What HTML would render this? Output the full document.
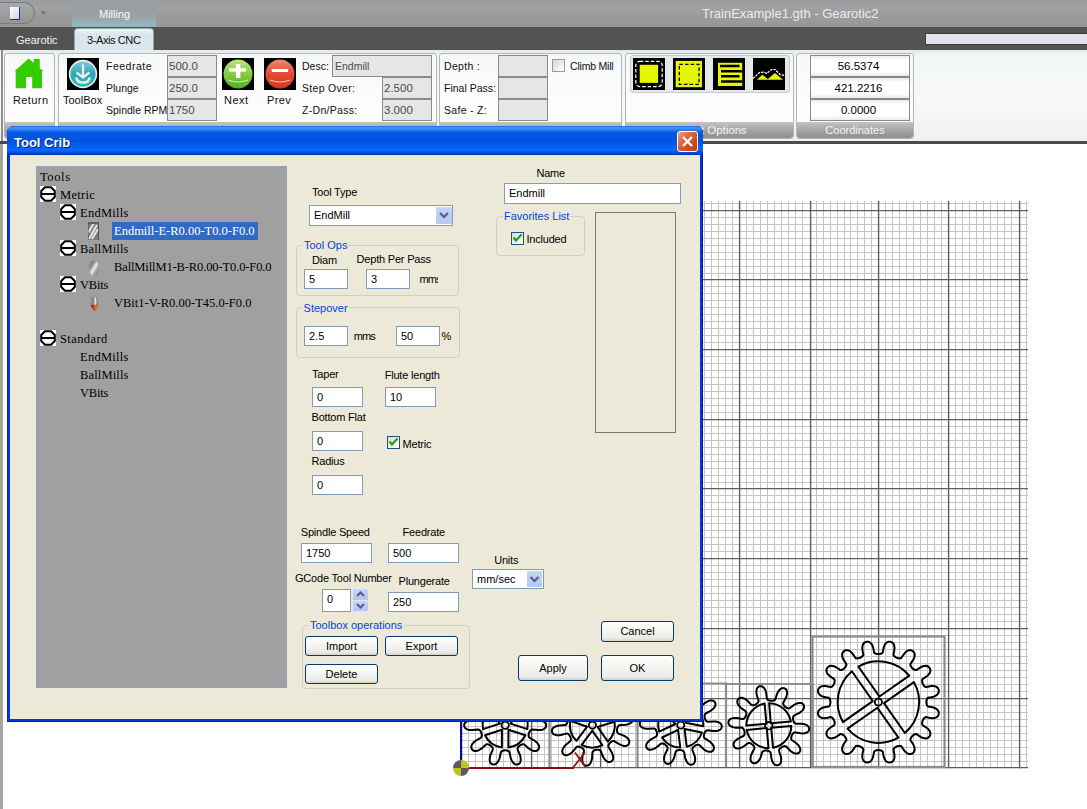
<!DOCTYPE html>
<html><head><meta charset="utf-8">
<style>
*{box-sizing:border-box;margin:0;padding:0}
html,body{width:1087px;height:809px;overflow:hidden;background:#fff;font-family:"Liberation Sans",sans-serif;position:relative}
.a{position:absolute}
svg{display:block}
.t{position:absolute;white-space:nowrap;line-height:1}
/* app chrome */
#titlebar{left:0;top:0;width:1087px;height:27px;background:linear-gradient(#9b9da1 0,#9c9ea1 6px,#a2a2a2 7px,#9b9b9b 16px,#979797 27px)}
#tabstrip{left:0;top:27px;width:1087px;height:23px;background:#535353}
#ribbon{left:0;top:50px;width:1087px;height:91px;background:linear-gradient(#dde9ee,#f3f6f7 6px,#f7f8f8 60%,#eef0f1)}
#ribline{left:0;top:141px;width:1087px;height:3px;background:#4a4a4a}
.grp{position:absolute;border:1px solid #b4b4b4;border-radius:3px;background:linear-gradient(#f6f8f8,#fbfbfb 40%,#fdfdfd)}
.glab{position:absolute;left:0;right:0;bottom:0;height:16px;background:linear-gradient(#c4c4c4,#a0a0a0 60%,#8e8e8e);color:#f4f4f4;font-size:11px;text-align:center;line-height:16px;border-radius:0 0 3px 3px}
.rl{font-size:10.5px;color:#111}
.rin{position:absolute;background:#e6e6e6;border:1px solid #8a8a8a;font-size:11.5px;color:#4a4a4a;line-height:20px;padding-left:1px}
.ico{position:absolute;width:32px;height:32px;background:#000}
/* dialog */
#dlg{left:7px;top:126px;width:696px;height:596px;background:#0535de;border-radius:7px 7px 0 0;box-shadow:inset 1px 0 #0028b8,inset -1px 0 #001ea8,inset 0 -1px #001ea8}
#dtitle{left:0;top:0;width:696px;height:29px;border-radius:7px 7px 0 0;background:linear-gradient(#0a50dc 0px,#3d93fb 1px,#3a8cf8 3px,#0a5ce8 6px,#0355e2 9px,#0052e0 15px,#0560f2 20px,#0a68fc 24px,#0555e8 26px,#0036c4 28px)}
#client{left:3px;top:29px;width:690px;height:564px;background:#ece9d8}
.dl{font-size:11px;color:#000;letter-spacing:-0.2px}
.din{position:absolute;background:#fff;border:1px solid #7f9db9;font-size:11px;line-height:18px;padding-left:9px;color:#000}
.gb{position:absolute;border:1px solid #d0d0bf;border-radius:4px}
.gbt{position:absolute;background:#ece9d8;color:#0046d5;font-size:11px;padding:0 1px;line-height:12px}
.btn{position:absolute;border:1px solid #003c74;border-radius:3px;background:linear-gradient(#fff,#f4f4f0 50%,#ecebe6 85%,#d6d0c5);font-size:11px;text-align:center;color:#000}
.cb{position:absolute;width:13px;height:13px;border:1px solid #1c5180;background:linear-gradient(135deg,#dcdcd7,#fff)}
.tree{font-family:"Liberation Serif",serif;font-size:12.5px;color:#000}
.node{position:absolute;width:16px;height:16px;background:#fff}
</style></head><body>

<!-- ============ APP CHROME ============ -->
<div id="titlebar" class="a">
  <div class="a" style="left:0;top:2px;width:35px;height:22px;border:1px solid #7c7c7c;border-left:none;border-radius:0 11px 11px 0;background:linear-gradient(#a8a8a8,#959595)"></div>
  <div class="a" style="left:10px;top:7px;width:10px;height:13px;background:linear-gradient(135deg,#fff,#c8d4ec);border-right:1px solid #2a3a55;border-bottom:1px solid #2a3a55"></div>
  <div class="t" style="left:41px;top:9px;font-size:8px;color:#444">&#187;</div>
  <div class="a" style="left:72px;top:6px;width:84px;height:21px;background:linear-gradient(#999c9e,#9aa2a6 50%,#98b6c2 92%,#7fb4c8)"></div>
  <div class="t" style="left:99px;top:9px;font-size:11px;color:#fafafa">Milling</div>
  <div class="t" style="left:702px;top:7px;font-size:13px;color:#ececec">TrainExample1.gth - Gearotic2</div>
</div>
<div id="tabstrip" class="a">
  <div class="t" style="left:16px;top:8px;font-size:11px;color:#f4f4f4;letter-spacing:0px">Gearotic</div>
  <div class="a" style="left:74px;top:1px;width:80px;height:22px;border-radius:4px 4px 0 0;border:1px solid #9aa4a8;border-bottom:none;background:linear-gradient(#eef4f6,#d8e5ea 30%,#dbe8ec)"></div>
  <div class="t" style="left:87px;top:8px;font-size:11px;color:#111;letter-spacing:-0.4px">3-Axis CNC</div>
  <div class="a" style="left:925px;top:6px;width:170px;height:12px;background:#e2e3ec;border:1px solid #3a3a3a"></div>
</div>
<div id="ribbon" class="a">
  <div class="a" style="left:1px;top:0;width:2px;height:91px;background:#8e8e8e"></div>
  <!-- group 1 Return -->
  <div class="grp" style="left:4px;top:3px;width:51px;height:86px"><div class="glab"></div></div>
  <!-- group 2 -->
  <div class="grp" style="left:58px;top:3px;width:379px;height:86px"><div class="glab"></div></div>
  <!-- group 3 -->
  <div class="grp" style="left:439px;top:3px;width:183px;height:86px"><div class="glab"></div></div>
  <!-- group 4 -->
  <div class="grp" style="left:625px;top:3px;width:169px;height:86px"><div class="glab" style="padding-left:14px;font-size:11.5px">Cut Options</div></div>
  <!-- group 5 -->
  <div class="grp" style="left:796px;top:3px;width:118px;height:86px"><div class="glab">Coordinates</div></div>
</div>
<div id="ribline" class="a"></div>
<div class="a" style="left:0;top:144px;width:3px;height:665px;background:#a8a49c"></div>

<!-- ribbon contents (absolute page coords) -->
<svg class="a" style="left:0;top:48px" width="60" height="45">
  <path d="M14.6 23 L28.7 10.5 L33.7 15 L33.7 11 L39.8 11 L39.8 20.5 L43.7 23 L42.1 23 L42.1 40.2 L32.2 40.2 L32.2 29.1 L26 29.1 L26 40.2 L15.7 40.2 L15.7 23 Z" fill="#33cc00"/>
</svg>
<div class="t rl" style="left:13px;top:95px;font-size:11px;letter-spacing:0.4px">Return</div>
<svg class="ico" style="left:67px;top:58px" width="32" height="32"><defs><linearGradient id="tg" x1="0" y1="0" x2="0" y2="1"><stop offset="0" stop-color="#7ad0de"/><stop offset="0.5" stop-color="#2aa6b8"/><stop offset="1" stop-color="#18c8b0"/></linearGradient></defs>
<rect width="32" height="32" fill="#000"/><circle cx="16" cy="16" r="14.2" fill="#f4ecec"/><circle cx="16" cy="16" r="12.6" fill="url(#tg)"/>
<path d="M16 6.5 V19" stroke="#f6e8ec" stroke-width="2.4"/><path d="M9.5 14.5 L16 19.5 L22.5 14.5" fill="none" stroke="#f6e8ec" stroke-width="2.4"/>
<path d="M9.5 19.5 Q9.5 24.5 16 24.5 Q22.5 24.5 22.5 19.5" fill="none" stroke="#f6e8ec" stroke-width="2.6"/></svg>
<div class="t rl" style="left:63px;top:95px;font-size:11px">ToolBox</div>
<div class="t rl" style="left:106px;top:61px;letter-spacing:0.5px">Feedrate</div>
<div class="t rl" style="left:106px;top:83px">Plunge</div>
<div class="t rl" style="left:106px;top:105px">Spindle RPM</div>
<div class="rin" style="left:167px;top:55px;width:50px;height:22px">500.0</div>
<div class="rin" style="left:167px;top:77px;width:50px;height:22px">250.0</div>
<div class="rin" style="left:167px;top:99px;width:50px;height:22px">1750</div>
<svg class="ico" style="left:222px;top:58px" width="32" height="32"><defs><linearGradient id="gg" x1="0" y1="0" x2="0" y2="1"><stop offset="0" stop-color="#b8e67a"/><stop offset="0.6" stop-color="#7cc63a"/><stop offset="1" stop-color="#4cb020"/></linearGradient></defs>
<rect width="32" height="32" fill="#000"/><circle cx="16" cy="16" r="14.5" fill="url(#gg)"/>
<rect x="7" y="10.2" width="17" height="3.4" fill="#fff"/><rect x="13.9" y="6" width="4.5" height="14" fill="#fff"/>
<path d="M6 22 Q16 26 26 22" fill="none" stroke="#c8f0a0" stroke-width="1.2"/></svg>
<div class="t rl" style="left:224px;top:95px;font-size:11px;letter-spacing:0.5px">Next</div>
<svg class="ico" style="left:264px;top:58px" width="32" height="32"><defs><linearGradient id="rg" x1="0" y1="0" x2="0" y2="1"><stop offset="0" stop-color="#f08878"/><stop offset="0.5" stop-color="#e04a34"/><stop offset="1" stop-color="#d83820"/></linearGradient></defs>
<rect width="32" height="32" fill="#000"/><circle cx="16" cy="16" r="14.5" fill="url(#rg)"/>
<rect x="7.7" y="11" width="16.3" height="3" fill="#fff"/>
<path d="M6 22 Q16 26 26 22" fill="none" stroke="#f8c0b0" stroke-width="1.2"/></svg>
<div class="t rl" style="left:267px;top:95px;font-size:11px;letter-spacing:0.4px">Prev</div>
<div class="t rl" style="left:302px;top:61px">Desc:</div>
<div class="t rl" style="left:302px;top:83px;letter-spacing:0.3px">Step Over:</div>
<div class="t rl" style="left:302px;top:105px;letter-spacing:0.3px">Z-Dn/Pass:</div>
<div class="rin" style="left:332px;top:55px;width:100px;height:22px;font-size:10.5px;line-height:21px;padding-left:2px">Endmill</div>
<div class="rin" style="left:382px;top:77px;width:50px;height:22px">2.500</div>
<div class="rin" style="left:382px;top:99px;width:50px;height:22px">3.000</div>
<div class="t rl" style="left:444px;top:61px;letter-spacing:0.3px">Depth :</div>
<div class="t rl" style="left:444px;top:83px">Final Pass:</div>
<div class="t rl" style="left:444px;top:105px;letter-spacing:0.3px">Safe - Z:</div>
<div class="rin" style="left:498px;top:55px;width:50px;height:22px"></div>
<div class="rin" style="left:498px;top:77px;width:50px;height:22px"></div>
<div class="rin" style="left:498px;top:99px;width:50px;height:22px"></div>
<div class="a" style="left:552px;top:59px;width:13px;height:13px;border:1px solid #9a9a9a;background:linear-gradient(135deg,#d8d8d8,#fff)"></div>
<div class="t rl" style="left:570px;top:61px;letter-spacing:-0.2px">Climb Mill</div>
<div class="a" style="left:630px;top:55px;width:160px;height:38px;border:1px solid #c4c8cc;border-radius:3px;background:#e4e8ea"></div>
<svg class="ico" style="left:633px;top:58px" width="32" height="32"><rect width="32" height="32" fill="#000"/><rect x="6.7" y="6.8" width="18.4" height="18.1" fill="#e6f500"/><rect x="2.8" y="3.3" width="26.4" height="25.3" rx="4" fill="none" stroke="#fff" stroke-width="1.2" stroke-dasharray="3.5 2"/></svg>
<svg class="ico" style="left:673px;top:58px" width="32" height="32"><rect width="32" height="32" fill="#000"/><rect x="2.7" y="2.9" width="26.3" height="26.3" fill="#e6f500"/><rect x="6.3" y="6.3" width="19.7" height="20" fill="none" stroke="#000" stroke-width="1.3" stroke-dasharray="3.5 2.2"/></svg>
<svg class="ico" style="left:713px;top:58px" width="32" height="32"><rect width="32" height="32" fill="#000"/><rect x="5" y="4.8" width="24.2" height="23.2" fill="#e6f500"/>
<path d="M7 8 H26.5 M8 13.3 H29.2 M8 18.3 H26.5 M8 23.5 H29.2" stroke="#000" stroke-width="2.4"/><path d="M7 8 V23.5" stroke="#000" stroke-width="0"/></svg>
<svg class="ico" style="left:753px;top:58px" width="32" height="32"><rect width="32" height="32" fill="#000"/><path d="M4 21.8 L9.3 16.8 L14.7 21 L22 14.9 L30 21.8 Z" fill="#e6f500"/>
<path d="M0 20.5 L6.5 14.5 L11 14 L13.5 15.5 L18.5 11.5 L22 11.5 L27 16.5 L32 17.5" fill="none" stroke="#fff" stroke-width="1.2" stroke-dasharray="2.5 1"/></svg>
<div class="rin" style="left:810px;top:55px;width:100px;height:22px;background:linear-gradient(#e8e8e8,#fff 20%,#fff 80%,#e8e8e8);color:#000;text-align:center;padding:0 3px 0 0;font-size:11.5px">56.5374</div>
<div class="rin" style="left:810px;top:77px;width:100px;height:22px;background:linear-gradient(#e8e8e8,#fff 20%,#fff 80%,#e8e8e8);color:#000;text-align:center;padding:0 3px 0 0;font-size:11.5px">421.2216</div>
<div class="rin" style="left:810px;top:99px;width:100px;height:22px;background:linear-gradient(#e8e8e8,#fff 20%,#fff 80%,#e8e8e8);color:#000;text-align:center;padding:0 3px 0 0;font-size:11.5px">0.0000</div>

<!-- ============ CANVAS ============ -->
<svg class="a" style="left:0;top:0" width="1087" height="809">
<path d="M468.5,201.0V768.0M475.5,201.0V768.0M482.5,201.0V768.0M489.5,201.0V768.0M496.5,201.0V768.0M503.5,201.0V768.0M510.5,201.0V768.0M517.5,201.0V768.0M524.5,201.0V768.0M537.5,201.0V768.0M544.5,201.0V768.0M551.5,201.0V768.0M558.5,201.0V768.0M565.5,201.0V768.0M572.5,201.0V768.0M579.5,201.0V768.0M586.5,201.0V768.0M593.5,201.0V768.0M607.5,201.0V768.0M614.5,201.0V768.0M621.5,201.0V768.0M628.5,201.0V768.0M635.5,201.0V768.0M642.5,201.0V768.0M649.5,201.0V768.0M656.5,201.0V768.0M663.5,201.0V768.0M676.5,201.0V768.0M683.5,201.0V768.0M690.5,201.0V768.0M697.5,201.0V768.0M704.5,201.0V768.0M711.5,201.0V768.0M718.5,201.0V768.0M725.5,201.0V768.0M732.5,201.0V768.0M746.5,201.0V768.0M753.5,201.0V768.0M760.5,201.0V768.0M767.5,201.0V768.0M774.5,201.0V768.0M781.5,201.0V768.0M788.5,201.0V768.0M795.5,201.0V768.0M802.5,201.0V768.0M816.5,201.0V768.0M823.5,201.0V768.0M830.5,201.0V768.0M837.5,201.0V768.0M844.5,201.0V768.0M850.5,201.0V768.0M857.5,201.0V768.0M864.5,201.0V768.0M871.5,201.0V768.0M885.5,201.0V768.0M892.5,201.0V768.0M899.5,201.0V768.0M906.5,201.0V768.0M913.5,201.0V768.0M920.5,201.0V768.0M927.5,201.0V768.0M934.5,201.0V768.0M941.5,201.0V768.0M955.5,201.0V768.0M962.5,201.0V768.0M969.5,201.0V768.0M976.5,201.0V768.0M983.5,201.0V768.0M990.5,201.0V768.0M997.5,201.0V768.0M1004.5,201.0V768.0M1011.5,201.0V768.0M1026.5,201.0V768.0M461.0,761.5H1028.0M461.0,754.5H1028.0M461.0,747.5H1028.0M461.0,740.5H1028.0M461.0,733.5H1028.0M461.0,726.5H1028.0M461.0,719.5H1028.0M461.0,712.5H1028.0M461.0,705.5H1028.0M461.0,691.5H1028.0M461.0,684.5H1028.0M461.0,677.5H1028.0M461.0,670.5H1028.0M461.0,663.5H1028.0M461.0,656.5H1028.0M461.0,649.5H1028.0M461.0,642.5H1028.0M461.0,635.5H1028.0M461.0,621.5H1028.0M461.0,614.5H1028.0M461.0,607.5H1028.0M461.0,600.5H1028.0M461.0,593.5H1028.0M461.0,586.5H1028.0M461.0,579.5H1028.0M461.0,572.5H1028.0M461.0,565.5H1028.0M461.0,551.5H1028.0M461.0,544.5H1028.0M461.0,537.5H1028.0M461.0,530.5H1028.0M461.0,523.5H1028.0M461.0,516.5H1028.0M461.0,509.5H1028.0M461.0,502.5H1028.0M461.0,495.5H1028.0M461.0,482.5H1028.0M461.0,475.5H1028.0M461.0,468.5H1028.0M461.0,461.5H1028.0M461.0,454.5H1028.0M461.0,447.5H1028.0M461.0,440.5H1028.0M461.0,433.5H1028.0M461.0,426.5H1028.0M461.0,412.5H1028.0M461.0,405.5H1028.0M461.0,398.5H1028.0M461.0,391.5H1028.0M461.0,384.5H1028.0M461.0,377.5H1028.0M461.0,370.5H1028.0M461.0,363.5H1028.0M461.0,356.5H1028.0M461.0,342.5H1028.0M461.0,335.5H1028.0M461.0,328.5H1028.0M461.0,321.5H1028.0M461.0,314.5H1028.0M461.0,307.5H1028.0M461.0,300.5H1028.0M461.0,293.5H1028.0M461.0,286.5H1028.0M461.0,273.5H1028.0M461.0,266.5H1028.0M461.0,259.5H1028.0M461.0,252.5H1028.0M461.0,245.5H1028.0M461.0,238.5H1028.0M461.0,231.5H1028.0M461.0,224.5H1028.0M461.0,217.5H1028.0M461.0,203.5H1028.0" stroke="#c4c4c4" stroke-width="1" fill="none"/>
<path d="M461.6,201.0V768.5M531.6,201.0V768.5M600.6,201.0V768.5M670.6,201.0V768.5M739.6,201.0V768.5M810.6,201.0V768.5M878.6,201.0V768.5M948.6,201.0V768.5M1019.6,201.0V768.5M461.0,767.6H1028.0M461.0,698.6H1028.0M461.0,628.6H1028.0M461.0,558.6H1028.0M461.0,488.6H1028.0M461.0,419.6H1028.0M461.0,349.6H1028.0M461.0,279.6H1028.0M461.0,210.6H1028.0" stroke="#5e5e5e" stroke-width="1.4" fill="none"/>
<path d="M549.5,767 V683.5 H637.5 V767 M637.5,683.5 H726 V767 M726,684 H812.5 V767" fill="none" stroke="#8c8c8c" stroke-width="2.2"/>
<rect x="812.5" y="636.5" width="132" height="130.5" fill="none" stroke="#8c8c8c" stroke-width="2.2"/>
<path d="M546.2,725.3 L546.2,725.7 L546.1,726.1 L546.0,726.5 L545.9,726.9 L545.7,727.3 L545.4,727.7 L545.1,728.0 L544.7,728.4 L544.2,728.8 L543.6,729.1 L542.9,729.4 L542.0,729.7 L541.0,729.9 L539.7,730.1 L537.8,730.1 L532.4,729.6 L531.5,729.7 L531.1,729.9 L530.8,730.1 L530.5,730.3 L530.3,730.6 L530.2,730.8 L530.0,731.0 L529.8,731.2 L529.7,731.4 L529.6,731.7 L529.4,731.9 L529.3,732.1 L529.2,732.3 L529.1,732.6 L529.1,732.8 L529.0,733.0 L528.9,733.3 L528.8,733.5 L528.8,733.7 L528.7,734.0 L528.7,734.2 L528.7,734.5 L528.6,734.7 L528.6,735.0 L528.6,735.3 L528.6,735.5 L528.6,735.8 L528.7,736.1 L528.7,736.4 L528.9,736.8 L529.0,737.2 L529.7,737.8 L534.4,740.5 L535.9,741.7 L536.9,742.6 L537.6,743.4 L538.1,744.1 L538.5,744.8 L538.8,745.4 L539.0,746.0 L539.1,746.5 L539.1,747.0 L539.1,747.5 L539.0,747.9 L538.9,748.3 L538.8,748.7 L538.6,749.1 L538.4,749.4 L538.1,749.7 L537.8,750.0 L537.5,750.3 L537.2,750.5 L536.8,750.7 L536.3,750.8 L535.8,751.0 L535.3,751.0 L534.7,751.0 L534.0,750.9 L533.3,750.8 L532.4,750.5 L531.5,750.1 L530.3,749.4 L528.7,748.4 L524.6,744.7 L523.8,744.3 L523.4,744.3 L523.1,744.2 L522.7,744.3 L522.4,744.3 L522.2,744.4 L521.9,744.5 L521.7,744.6 L521.4,744.7 L521.2,744.8 L520.9,744.9 L520.7,745.0 L520.5,745.1 L520.3,745.2 L520.1,745.4 L519.9,745.5 L519.7,745.7 L519.5,745.8 L519.3,746.0 L519.1,746.2 L519.0,746.3 L518.8,746.5 L518.6,746.7 L518.4,746.9 L518.3,747.1 L518.1,747.3 L518.0,747.6 L517.8,747.9 L517.7,748.1 L517.6,748.5 L517.5,748.9 L517.7,749.8 L519.9,754.8 L520.4,756.6 L520.6,757.9 L520.7,759.0 L520.7,759.9 L520.7,760.6 L520.5,761.3 L520.3,761.9 L520.1,762.4 L519.9,762.8 L519.6,763.2 L519.3,763.5 L519.0,763.8 L518.6,764.0 L518.2,764.2 L517.9,764.3 L517.5,764.4 L517.1,764.5 L516.7,764.5 L516.2,764.5 L515.8,764.4 L515.4,764.3 L514.9,764.1 L514.4,763.8 L514.0,763.4 L513.5,763.0 L513.0,762.4 L512.4,761.7 L511.9,760.8 L511.3,759.6 L510.7,757.8 L509.5,752.5 L509.1,751.6 L508.8,751.3 L508.5,751.1 L508.2,751.0 L508.0,750.8 L507.7,750.7 L507.4,750.6 L507.2,750.6 L506.9,750.5 L506.7,750.4 L506.4,750.4 L506.2,750.4 L505.9,750.3 L505.7,750.3 L505.4,750.3 L505.2,750.3 L505.0,750.3 L504.7,750.3 L504.5,750.3 L504.2,750.4 L504.0,750.4 L503.7,750.4 L503.5,750.5 L503.2,750.6 L503.0,750.6 L502.7,750.7 L502.4,750.8 L502.2,751.0 L501.9,751.1 L501.6,751.3 L501.3,751.6 L500.9,752.5 L499.7,757.8 L499.1,759.6 L498.5,760.8 L498.0,761.7 L497.4,762.4 L496.9,763.0 L496.4,763.4 L496.0,763.8 L495.5,764.1 L495.0,764.3 L494.6,764.4 L494.2,764.5 L493.7,764.5 L493.3,764.5 L492.9,764.4 L492.5,764.3 L492.2,764.2 L491.8,764.0 L491.4,763.8 L491.1,763.5 L490.8,763.2 L490.5,762.8 L490.3,762.4 L490.1,761.9 L489.9,761.3 L489.7,760.6 L489.7,759.9 L489.7,759.0 L489.8,757.9 L490.0,756.6 L490.5,754.8 L492.7,749.8 L492.9,748.9 L492.8,748.5 L492.7,748.1 L492.6,747.9 L492.4,747.6 L492.3,747.3 L492.1,747.1 L492.0,746.9 L491.8,746.7 L491.6,746.5 L491.4,746.3 L491.3,746.2 L491.1,746.0 L490.9,745.8 L490.7,745.7 L490.5,745.5 L490.3,745.4 L490.1,745.2 L489.9,745.1 L489.7,745.0 L489.5,744.9 L489.2,744.8 L489.0,744.7 L488.7,744.6 L488.5,744.5 L488.2,744.4 L488.0,744.3 L487.7,744.3 L487.3,744.2 L487.0,744.3 L486.6,744.3 L485.8,744.7 L481.7,748.4 L480.1,749.4 L478.9,750.1 L478.0,750.5 L477.1,750.8 L476.4,750.9 L475.7,751.0 L475.1,751.0 L474.6,751.0 L474.1,750.8 L473.6,750.7 L473.2,750.5 L472.9,750.3 L472.6,750.0 L472.3,749.7 L472.0,749.4 L471.8,749.1 L471.6,748.7 L471.5,748.3 L471.4,747.9 L471.3,747.5 L471.3,747.0 L471.3,746.5 L471.4,746.0 L471.6,745.4 L471.9,744.8 L472.3,744.1 L472.8,743.4 L473.5,742.6 L474.5,741.7 L476.0,740.5 L480.7,737.8 L481.4,737.2 L481.5,736.8 L481.7,736.4 L481.7,736.1 L481.8,735.8 L481.8,735.5 L481.8,735.3 L481.8,735.0 L481.8,734.7 L481.7,734.5 L481.7,734.2 L481.7,734.0 L481.6,733.7 L481.6,733.5 L481.5,733.3 L481.4,733.0 L481.3,732.8 L481.3,732.6 L481.2,732.3 L481.1,732.1 L481.0,731.9 L480.8,731.7 L480.7,731.4 L480.6,731.2 L480.4,731.0 L480.2,730.8 L480.1,730.6 L479.9,730.3 L479.6,730.1 L479.3,729.9 L478.9,729.7 L478.0,729.6 L472.6,730.1 L470.7,730.1 L469.4,729.9 L468.4,729.7 L467.5,729.4 L466.8,729.1 L466.2,728.8 L465.7,728.4 L465.3,728.0 L465.0,727.7 L464.7,727.3 L464.5,726.9 L464.4,726.5 L464.3,726.1 L464.2,725.7 L464.2,725.3 L464.2,724.9 L464.3,724.5 L464.4,724.1 L464.5,723.7 L464.7,723.3 L465.0,722.9 L465.3,722.6 L465.7,722.2 L466.2,721.8 L466.8,721.5 L467.5,721.2 L468.4,720.9 L469.4,720.7 L470.7,720.5 L472.6,720.5 L478.0,721.0 L478.9,720.9 L479.3,720.7 L479.6,720.5 L479.9,720.3 L480.1,720.0 L480.2,719.8 L480.4,719.6 L480.6,719.4 L480.7,719.2 L480.8,718.9 L481.0,718.7 L481.1,718.5 L481.2,718.3 L481.3,718.0 L481.3,717.8 L481.4,717.6 L481.5,717.3 L481.6,717.1 L481.6,716.9 L481.7,716.6 L481.7,716.4 L481.7,716.1 L481.8,715.9 L481.8,715.6 L481.8,715.3 L481.8,715.1 L481.8,714.8 L481.7,714.5 L481.7,714.2 L481.5,713.8 L481.4,713.4 L480.7,712.8 L476.0,710.1 L474.5,708.9 L473.5,708.0 L472.8,707.2 L472.3,706.5 L471.9,705.8 L471.6,705.2 L471.4,704.6 L471.3,704.1 L471.3,703.6 L471.3,703.1 L471.4,702.7 L471.5,702.3 L471.6,701.9 L471.8,701.5 L472.0,701.2 L472.3,700.9 L472.6,700.6 L472.9,700.3 L473.2,700.1 L473.6,699.9 L474.1,699.8 L474.6,699.6 L475.1,699.6 L475.7,699.6 L476.4,699.7 L477.1,699.8 L478.0,700.1 L478.9,700.5 L480.1,701.2 L481.7,702.2 L485.8,705.9 L486.6,706.3 L487.0,706.3 L487.3,706.4 L487.7,706.3 L488.0,706.3 L488.2,706.2 L488.5,706.1 L488.7,706.0 L489.0,705.9 L489.2,705.8 L489.5,705.7 L489.7,705.6 L489.9,705.5 L490.1,705.4 L490.3,705.2 L490.5,705.1 L490.7,704.9 L490.9,704.8 L491.1,704.6 L491.3,704.4 L491.4,704.3 L491.6,704.1 L491.8,703.9 L492.0,703.7 L492.1,703.5 L492.3,703.3 L492.4,703.0 L492.6,702.7 L492.7,702.5 L492.8,702.1 L492.9,701.7 L492.7,700.8 L490.5,695.8 L490.0,694.0 L489.8,692.7 L489.7,691.6 L489.7,690.7 L489.7,690.0 L489.9,689.3 L490.1,688.7 L490.3,688.2 L490.5,687.8 L490.8,687.4 L491.1,687.1 L491.4,686.8 L491.8,686.6 L492.2,686.4 L492.5,686.3 L492.9,686.2 L493.3,686.1 L493.7,686.1 L494.2,686.1 L494.6,686.2 L495.0,686.3 L495.5,686.5 L496.0,686.8 L496.4,687.2 L496.9,687.6 L497.4,688.2 L498.0,688.9 L498.5,689.8 L499.1,691.0 L499.7,692.8 L500.9,698.1 L501.3,699.0 L501.6,699.3 L501.9,699.5 L502.2,699.6 L502.4,699.8 L502.7,699.9 L503.0,700.0 L503.2,700.0 L503.5,700.1 L503.7,700.2 L504.0,700.2 L504.2,700.2 L504.5,700.3 L504.7,700.3 L505.0,700.3 L505.2,700.3 L505.4,700.3 L505.7,700.3 L505.9,700.3 L506.2,700.2 L506.4,700.2 L506.7,700.2 L506.9,700.1 L507.2,700.0 L507.4,700.0 L507.7,699.9 L508.0,699.8 L508.2,699.6 L508.5,699.5 L508.8,699.3 L509.1,699.0 L509.5,698.1 L510.7,692.8 L511.3,691.0 L511.9,689.8 L512.4,688.9 L513.0,688.2 L513.5,687.6 L514.0,687.2 L514.4,686.8 L514.9,686.5 L515.4,686.3 L515.8,686.2 L516.2,686.1 L516.7,686.1 L517.1,686.1 L517.5,686.2 L517.9,686.3 L518.2,686.4 L518.6,686.6 L519.0,686.8 L519.3,687.1 L519.6,687.4 L519.9,687.8 L520.1,688.2 L520.3,688.7 L520.5,689.3 L520.7,690.0 L520.7,690.7 L520.7,691.6 L520.6,692.7 L520.4,694.0 L519.9,695.8 L517.7,700.8 L517.5,701.7 L517.6,702.1 L517.7,702.5 L517.8,702.7 L518.0,703.0 L518.1,703.3 L518.3,703.5 L518.4,703.7 L518.6,703.9 L518.8,704.1 L519.0,704.3 L519.1,704.4 L519.3,704.6 L519.5,704.8 L519.7,704.9 L519.9,705.1 L520.1,705.2 L520.3,705.4 L520.5,705.5 L520.7,705.6 L520.9,705.7 L521.2,705.8 L521.4,705.9 L521.7,706.0 L521.9,706.1 L522.2,706.2 L522.4,706.3 L522.7,706.3 L523.1,706.4 L523.4,706.3 L523.8,706.3 L524.6,705.9 L528.7,702.2 L530.3,701.2 L531.5,700.5 L532.4,700.1 L533.3,699.8 L534.0,699.7 L534.7,699.6 L535.3,699.6 L535.8,699.6 L536.3,699.8 L536.8,699.9 L537.2,700.1 L537.5,700.3 L537.8,700.6 L538.1,700.9 L538.4,701.2 L538.6,701.5 L538.8,701.9 L538.9,702.3 L539.0,702.7 L539.1,703.1 L539.1,703.6 L539.1,704.1 L539.0,704.6 L538.8,705.2 L538.5,705.8 L538.1,706.5 L537.6,707.2 L536.9,708.0 L535.9,708.9 L534.4,710.1 L529.7,712.8 L529.0,713.4 L528.9,713.8 L528.7,714.2 L528.7,714.5 L528.6,714.8 L528.6,715.1 L528.6,715.3 L528.6,715.6 L528.6,715.9 L528.7,716.1 L528.7,716.4 L528.7,716.6 L528.8,716.9 L528.8,717.1 L528.9,717.3 L529.0,717.6 L529.1,717.8 L529.1,718.0 L529.2,718.3 L529.3,718.5 L529.4,718.7 L529.6,718.9 L529.7,719.2 L529.8,719.4 L530.0,719.6 L530.2,719.8 L530.3,720.0 L530.5,720.3 L530.8,720.5 L531.1,720.7 L531.5,720.9 L532.4,721.0 L537.8,720.5 L539.7,720.5 L541.0,720.7 L542.0,720.9 L542.9,721.2 L543.6,721.5 L544.2,721.8 L544.7,722.2 L545.1,722.6 L545.4,722.9 L545.7,723.3 L545.9,723.7 L546.0,724.1 L546.1,724.5 L546.2,724.9 L546.2,725.3Z" fill="none" stroke="#000" stroke-width="2" stroke-linejoin="round"/>
<path d="M501.9,729.8 L501.9,747.6 A22.5,22.5 0 0 1 485.0,735.3 Z" fill="none" stroke="#000" stroke-width="2" stroke-linejoin="round"/>
<path d="M499.9,723.6 L483.0,729.1 A22.5,22.5 0 0 1 489.5,709.2 Z" fill="none" stroke="#000" stroke-width="2" stroke-linejoin="round"/>
<path d="M505.2,719.8 L494.7,705.4 A22.5,22.5 0 0 1 515.7,705.4 Z" fill="none" stroke="#000" stroke-width="2" stroke-linejoin="round"/>
<path d="M510.5,723.6 L520.9,709.2 A22.5,22.5 0 0 1 527.4,729.1 Z" fill="none" stroke="#000" stroke-width="2" stroke-linejoin="round"/>
<path d="M508.4,729.8 L525.4,735.3 A22.5,22.5 0 0 1 508.4,747.6 Z" fill="none" stroke="#000" stroke-width="2" stroke-linejoin="round"/>
<circle cx="505.2" cy="725.3" r="3.6" fill="none" stroke="#000" stroke-width="1.8"/>
<path d="M628.9,743.7 L628.7,744.1 L628.5,744.4 L628.2,744.7 L627.9,745.0 L627.6,745.2 L627.1,745.5 L626.7,745.6 L626.2,745.8 L625.6,745.9 L624.9,745.9 L624.1,745.9 L623.2,745.7 L622.2,745.4 L620.9,745.0 L619.2,744.2 L614.6,741.3 L613.8,741.0 L613.4,741.0 L613.0,741.0 L612.7,741.1 L612.4,741.2 L612.1,741.3 L611.9,741.4 L611.7,741.6 L611.4,741.7 L611.2,741.8 L611.0,742.0 L610.8,742.1 L610.6,742.3 L610.4,742.4 L610.3,742.6 L610.1,742.8 L609.9,743.0 L609.7,743.1 L609.6,743.3 L609.4,743.5 L609.3,743.7 L609.1,743.9 L609.0,744.1 L608.9,744.4 L608.7,744.6 L608.6,744.8 L608.5,745.1 L608.4,745.4 L608.3,745.7 L608.3,746.1 L608.3,746.5 L608.6,747.3 L611.5,751.9 L612.3,753.6 L612.7,754.9 L613.0,755.9 L613.2,756.8 L613.2,757.6 L613.2,758.3 L613.1,758.9 L612.9,759.4 L612.8,759.8 L612.5,760.3 L612.3,760.6 L612.0,760.9 L611.7,761.2 L611.4,761.4 L611.0,761.6 L610.6,761.8 L610.3,761.9 L609.9,762.0 L609.4,762.1 L609.0,762.1 L608.5,762.0 L608.1,761.9 L607.5,761.7 L607.0,761.4 L606.5,761.0 L605.9,760.5 L605.2,759.9 L604.6,759.1 L603.8,758.0 L602.9,756.3 L600.9,751.3 L600.4,750.5 L600.0,750.3 L599.7,750.1 L599.4,750.0 L599.1,749.9 L598.9,749.8 L598.6,749.8 L598.3,749.7 L598.1,749.7 L597.8,749.7 L597.5,749.7 L597.3,749.7 L597.0,749.7 L596.8,749.7 L596.6,749.8 L596.3,749.8 L596.1,749.8 L595.8,749.9 L595.6,749.9 L595.3,750.0 L595.1,750.1 L594.9,750.2 L594.6,750.3 L594.4,750.4 L594.1,750.5 L593.9,750.6 L593.7,750.8 L593.4,750.9 L593.2,751.1 L592.9,751.4 L592.7,751.7 L592.4,752.6 L592.1,758.0 L591.7,759.9 L591.3,761.2 L590.9,762.2 L590.5,763.0 L590.1,763.6 L589.7,764.1 L589.3,764.6 L588.9,764.9 L588.5,765.2 L588.0,765.4 L587.6,765.5 L587.2,765.6 L586.8,765.7 L586.4,765.6 L586.0,765.6 L585.6,765.5 L585.2,765.4 L584.8,765.2 L584.5,765.0 L584.1,764.8 L583.8,764.4 L583.5,764.1 L583.2,763.6 L582.9,763.1 L582.7,762.4 L582.5,761.7 L582.3,760.8 L582.3,759.7 L582.3,758.4 L582.5,756.5 L583.9,751.3 L583.9,750.3 L583.8,749.9 L583.6,749.6 L583.5,749.3 L583.3,749.1 L583.1,748.9 L582.9,748.7 L582.7,748.5 L582.5,748.3 L582.3,748.2 L582.1,748.0 L581.9,747.9 L581.7,747.7 L581.5,747.6 L581.3,747.5 L581.1,747.4 L580.8,747.3 L580.6,747.2 L580.4,747.1 L580.1,747.0 L579.9,746.9 L579.7,746.8 L579.4,746.8 L579.2,746.7 L578.9,746.7 L578.6,746.6 L578.3,746.6 L578.0,746.6 L577.7,746.6 L577.4,746.7 L577.0,746.8 L576.2,747.3 L572.8,751.6 L571.4,752.8 L570.3,753.7 L569.4,754.2 L568.6,754.6 L567.9,754.9 L567.3,755.1 L566.7,755.2 L566.1,755.2 L565.6,755.2 L565.2,755.1 L564.8,755.0 L564.4,754.8 L564.0,754.6 L563.7,754.4 L563.4,754.1 L563.1,753.8 L562.9,753.5 L562.7,753.1 L562.5,752.7 L562.4,752.3 L562.3,751.9 L562.3,751.4 L562.3,750.8 L562.4,750.2 L562.6,749.6 L562.9,748.9 L563.3,748.1 L563.8,747.2 L564.7,746.1 L565.9,744.7 L570.2,741.3 L570.7,740.5 L570.8,740.1 L570.9,739.8 L570.9,739.5 L570.9,739.2 L570.9,738.9 L570.8,738.6 L570.8,738.3 L570.7,738.1 L570.7,737.8 L570.6,737.6 L570.5,737.4 L570.4,737.1 L570.3,736.9 L570.2,736.7 L570.1,736.4 L570.0,736.2 L569.9,736.0 L569.8,735.8 L569.6,735.6 L569.5,735.4 L569.3,735.2 L569.2,735.0 L569.0,734.8 L568.8,734.6 L568.6,734.4 L568.4,734.2 L568.2,734.0 L567.9,733.9 L567.6,733.7 L567.2,733.6 L566.2,733.6 L561.0,735.0 L559.1,735.2 L557.8,735.2 L556.7,735.2 L555.8,735.0 L555.1,734.8 L554.4,734.6 L553.9,734.3 L553.4,734.0 L553.1,733.7 L552.7,733.4 L552.5,733.0 L552.3,732.7 L552.1,732.3 L552.0,731.9 L551.9,731.5 L551.9,731.1 L551.8,730.7 L551.9,730.3 L552.0,729.9 L552.1,729.5 L552.3,729.0 L552.6,728.6 L552.9,728.2 L553.4,727.8 L553.9,727.4 L554.5,727.0 L555.3,726.6 L556.3,726.2 L557.6,725.8 L559.5,725.4 L564.9,725.1 L565.8,724.8 L566.1,724.6 L566.4,724.3 L566.6,724.1 L566.7,723.8 L566.9,723.6 L567.0,723.4 L567.1,723.1 L567.2,722.9 L567.3,722.6 L567.4,722.4 L567.5,722.2 L567.6,721.9 L567.6,721.7 L567.7,721.4 L567.7,721.2 L567.7,720.9 L567.8,720.7 L567.8,720.5 L567.8,720.2 L567.8,720.0 L567.8,719.7 L567.8,719.4 L567.8,719.2 L567.7,718.9 L567.7,718.6 L567.6,718.4 L567.5,718.1 L567.4,717.8 L567.2,717.5 L567.0,717.1 L566.2,716.6 L561.2,714.6 L559.5,713.7 L558.4,712.9 L557.6,712.3 L557.0,711.6 L556.5,711.0 L556.1,710.5 L555.8,710.0 L555.6,709.4 L555.5,709.0 L555.4,708.5 L555.4,708.1 L555.5,707.6 L555.6,707.2 L555.7,706.9 L555.9,706.5 L556.1,706.1 L556.3,705.8 L556.6,705.5 L556.9,705.2 L557.2,705.0 L557.7,704.7 L558.1,704.6 L558.6,704.4 L559.2,704.3 L559.9,704.3 L560.7,704.3 L561.6,704.5 L562.6,704.8 L563.9,705.2 L565.6,706.0 L570.2,708.9 L571.0,709.2 L571.4,709.2 L571.8,709.2 L572.1,709.1 L572.4,709.0 L572.7,708.9 L572.9,708.8 L573.1,708.6 L573.4,708.5 L573.6,708.4 L573.8,708.2 L574.0,708.1 L574.2,707.9 L574.4,707.8 L574.5,707.6 L574.7,707.4 L574.9,707.2 L575.1,707.1 L575.2,706.9 L575.4,706.7 L575.5,706.5 L575.7,706.3 L575.8,706.1 L575.9,705.8 L576.1,705.6 L576.2,705.4 L576.3,705.1 L576.4,704.8 L576.5,704.5 L576.5,704.1 L576.5,703.7 L576.2,702.9 L573.3,698.3 L572.5,696.6 L572.1,695.3 L571.8,694.3 L571.6,693.4 L571.6,692.6 L571.6,691.9 L571.7,691.3 L571.9,690.8 L572.0,690.4 L572.3,689.9 L572.5,689.6 L572.8,689.3 L573.1,689.0 L573.4,688.8 L573.8,688.6 L574.2,688.4 L574.5,688.3 L574.9,688.2 L575.4,688.1 L575.8,688.1 L576.3,688.2 L576.7,688.3 L577.3,688.5 L577.8,688.8 L578.3,689.2 L578.9,689.7 L579.6,690.3 L580.2,691.1 L581.0,692.2 L581.9,693.9 L583.9,698.9 L584.4,699.7 L584.8,699.9 L585.1,700.1 L585.4,700.2 L585.7,700.3 L585.9,700.4 L586.2,700.4 L586.5,700.5 L586.7,700.5 L587.0,700.5 L587.3,700.5 L587.5,700.5 L587.8,700.5 L588.0,700.5 L588.2,700.4 L588.5,700.4 L588.7,700.4 L589.0,700.3 L589.2,700.3 L589.5,700.2 L589.7,700.1 L589.9,700.0 L590.2,699.9 L590.4,699.8 L590.7,699.7 L590.9,699.6 L591.1,699.4 L591.4,699.3 L591.6,699.1 L591.9,698.8 L592.1,698.5 L592.4,697.6 L592.7,692.2 L593.1,690.3 L593.5,689.0 L593.9,688.0 L594.3,687.2 L594.7,686.6 L595.1,686.1 L595.5,685.6 L595.9,685.3 L596.3,685.0 L596.8,684.8 L597.2,684.7 L597.6,684.6 L598.0,684.5 L598.4,684.6 L598.8,684.6 L599.2,684.7 L599.6,684.8 L600.0,685.0 L600.3,685.2 L600.7,685.4 L601.0,685.8 L601.3,686.1 L601.6,686.6 L601.9,687.1 L602.1,687.8 L602.3,688.5 L602.5,689.4 L602.5,690.5 L602.5,691.8 L602.3,693.7 L600.9,698.9 L600.9,699.9 L601.0,700.3 L601.2,700.6 L601.3,700.9 L601.5,701.1 L601.7,701.3 L601.9,701.5 L602.1,701.7 L602.3,701.9 L602.5,702.0 L602.7,702.2 L602.9,702.3 L603.1,702.5 L603.3,702.6 L603.5,702.7 L603.7,702.8 L604.0,702.9 L604.2,703.0 L604.4,703.1 L604.7,703.2 L604.9,703.3 L605.1,703.4 L605.4,703.4 L605.6,703.5 L605.9,703.5 L606.2,703.6 L606.5,703.6 L606.8,703.6 L607.1,703.6 L607.4,703.5 L607.8,703.4 L608.6,702.9 L612.0,698.6 L613.4,697.4 L614.5,696.5 L615.4,696.0 L616.2,695.6 L616.9,695.3 L617.5,695.1 L618.1,695.0 L618.7,695.0 L619.2,695.0 L619.6,695.1 L620.0,695.2 L620.4,695.4 L620.8,695.6 L621.1,695.8 L621.4,696.1 L621.7,696.4 L621.9,696.7 L622.1,697.1 L622.3,697.5 L622.4,697.9 L622.5,698.3 L622.5,698.8 L622.5,699.4 L622.4,700.0 L622.2,700.6 L621.9,701.3 L621.5,702.1 L621.0,703.0 L620.1,704.1 L618.9,705.5 L614.6,708.9 L614.1,709.7 L614.0,710.1 L613.9,710.4 L613.9,710.7 L613.9,711.0 L613.9,711.3 L614.0,711.6 L614.0,711.9 L614.1,712.1 L614.1,712.4 L614.2,712.6 L614.3,712.8 L614.4,713.1 L614.5,713.3 L614.6,713.5 L614.7,713.8 L614.8,714.0 L614.9,714.2 L615.0,714.4 L615.2,714.6 L615.3,714.8 L615.5,715.0 L615.6,715.2 L615.8,715.4 L616.0,715.6 L616.2,715.8 L616.4,716.0 L616.6,716.2 L616.9,716.3 L617.2,716.5 L617.6,716.6 L618.6,716.6 L623.8,715.2 L625.7,715.0 L627.0,715.0 L628.1,715.0 L629.0,715.2 L629.7,715.4 L630.4,715.6 L630.9,715.9 L631.4,716.2 L631.7,716.5 L632.1,716.8 L632.3,717.2 L632.5,717.5 L632.7,717.9 L632.8,718.3 L632.9,718.7 L632.9,719.1 L633.0,719.5 L632.9,719.9 L632.8,720.3 L632.7,720.7 L632.5,721.2 L632.2,721.6 L631.9,722.0 L631.4,722.4 L630.9,722.8 L630.3,723.2 L629.5,723.6 L628.5,724.0 L627.2,724.4 L625.3,724.8 L619.9,725.1 L619.0,725.4 L618.7,725.6 L618.4,725.9 L618.2,726.1 L618.1,726.4 L617.9,726.6 L617.8,726.8 L617.7,727.1 L617.6,727.3 L617.5,727.6 L617.4,727.8 L617.3,728.0 L617.2,728.3 L617.2,728.5 L617.1,728.8 L617.1,729.0 L617.1,729.3 L617.0,729.5 L617.0,729.7 L617.0,730.0 L617.0,730.2 L617.0,730.5 L617.0,730.8 L617.0,731.0 L617.1,731.3 L617.1,731.6 L617.2,731.8 L617.3,732.1 L617.4,732.4 L617.6,732.7 L617.8,733.1 L618.6,733.6 L623.6,735.6 L625.3,736.5 L626.4,737.3 L627.2,737.9 L627.8,738.6 L628.3,739.2 L628.7,739.7 L629.0,740.2 L629.2,740.8 L629.3,741.2 L629.4,741.7 L629.4,742.1 L629.3,742.6 L629.2,743.0 L629.1,743.3 L628.9,743.7Z" fill="none" stroke="#000" stroke-width="2" stroke-linejoin="round"/>
<path d="M592.3,730.6 L602.5,745.2 A22.5,22.5 0 0 1 581.6,744.8 Z" fill="none" stroke="#000" stroke-width="2" stroke-linejoin="round"/>
<path d="M587.1,726.7 L576.4,740.9 A22.5,22.5 0 0 1 570.3,720.9 Z" fill="none" stroke="#000" stroke-width="2" stroke-linejoin="round"/>
<path d="M589.2,720.6 L572.4,714.8 A22.5,22.5 0 0 1 589.5,702.8 Z" fill="none" stroke="#000" stroke-width="2" stroke-linejoin="round"/>
<path d="M595.7,720.7 L596.0,702.9 A22.5,22.5 0 0 1 612.7,715.5 Z" fill="none" stroke="#000" stroke-width="2" stroke-linejoin="round"/>
<path d="M597.6,726.9 L614.6,721.7 A22.5,22.5 0 0 1 607.8,741.5 Z" fill="none" stroke="#000" stroke-width="2" stroke-linejoin="round"/>
<circle cx="592.4" cy="725.1" r="3.6" fill="none" stroke="#000" stroke-width="1.8"/>
<path d="M721.8,726.5 L721.7,726.9 L721.7,727.3 L721.6,727.7 L721.4,728.1 L721.2,728.5 L720.9,728.9 L720.6,729.2 L720.1,729.6 L719.6,729.9 L719.0,730.2 L718.3,730.5 L717.5,730.7 L716.4,730.9 L715.1,731.1 L713.2,731.1 L707.8,730.3 L706.9,730.4 L706.5,730.6 L706.2,730.8 L706.0,731.0 L705.7,731.2 L705.5,731.4 L705.4,731.7 L705.2,731.9 L705.1,732.1 L704.9,732.3 L704.8,732.5 L704.7,732.7 L704.6,733.0 L704.5,733.2 L704.4,733.4 L704.3,733.7 L704.2,733.9 L704.1,734.1 L704.1,734.4 L704.0,734.6 L704.0,734.8 L703.9,735.1 L703.9,735.3 L703.9,735.6 L703.8,735.9 L703.8,736.1 L703.8,736.4 L703.9,736.7 L703.9,737.0 L704.0,737.4 L704.2,737.8 L704.9,738.4 L709.4,741.3 L710.9,742.6 L711.8,743.5 L712.5,744.3 L713.0,745.1 L713.4,745.8 L713.6,746.4 L713.8,747.0 L713.9,747.5 L713.9,748.0 L713.9,748.4 L713.8,748.9 L713.7,749.3 L713.5,749.7 L713.3,750.0 L713.1,750.3 L712.8,750.6 L712.6,750.9 L712.2,751.2 L711.9,751.4 L711.5,751.6 L711.0,751.7 L710.5,751.8 L710.0,751.8 L709.4,751.8 L708.7,751.7 L708.0,751.5 L707.1,751.2 L706.2,750.8 L705.0,750.1 L703.5,749.0 L699.6,745.2 L698.8,744.8 L698.3,744.7 L698.0,744.7 L697.7,744.7 L697.4,744.7 L697.1,744.8 L696.8,744.8 L696.6,744.9 L696.3,745.0 L696.1,745.1 L695.9,745.2 L695.6,745.3 L695.4,745.4 L695.2,745.6 L695.0,745.7 L694.8,745.8 L694.6,746.0 L694.4,746.1 L694.2,746.3 L694.0,746.4 L693.8,746.6 L693.6,746.8 L693.4,747.0 L693.3,747.2 L693.1,747.4 L692.9,747.6 L692.8,747.8 L692.6,748.1 L692.5,748.4 L692.4,748.7 L692.3,749.1 L692.4,750.0 L694.4,755.1 L694.9,756.9 L695.1,758.2 L695.1,759.3 L695.1,760.2 L695.0,761.0 L694.9,761.6 L694.7,762.2 L694.4,762.7 L694.2,763.1 L693.9,763.5 L693.5,763.8 L693.2,764.0 L692.9,764.2 L692.5,764.4 L692.1,764.5 L691.7,764.6 L691.3,764.7 L690.9,764.7 L690.5,764.6 L690.0,764.6 L689.6,764.4 L689.2,764.2 L688.7,763.9 L688.2,763.5 L687.7,763.0 L687.3,762.5 L686.8,761.7 L686.3,760.8 L685.7,759.5 L685.1,757.7 L684.2,752.4 L683.8,751.6 L683.5,751.3 L683.2,751.0 L682.9,750.9 L682.7,750.7 L682.4,750.6 L682.2,750.5 L681.9,750.4 L681.7,750.3 L681.4,750.3 L681.2,750.2 L680.9,750.2 L680.7,750.1 L680.4,750.1 L680.2,750.1 L679.9,750.1 L679.7,750.1 L679.4,750.1 L679.2,750.1 L678.9,750.1 L678.7,750.1 L678.4,750.2 L678.2,750.2 L677.9,750.3 L677.7,750.3 L677.4,750.4 L677.1,750.5 L676.9,750.6 L676.6,750.8 L676.3,751.0 L676.0,751.3 L675.6,752.1 L674.2,757.4 L673.5,759.1 L672.9,760.3 L672.3,761.2 L671.7,761.9 L671.2,762.5 L670.7,762.9 L670.2,763.2 L669.7,763.5 L669.3,763.7 L668.8,763.8 L668.4,763.9 L668.0,763.9 L667.6,763.8 L667.2,763.8 L666.8,763.6 L666.4,763.5 L666.0,763.3 L665.7,763.1 L665.4,762.8 L665.1,762.4 L664.8,762.1 L664.6,761.6 L664.4,761.1 L664.2,760.5 L664.1,759.9 L664.1,759.1 L664.1,758.2 L664.2,757.2 L664.5,755.9 L665.1,754.1 L667.5,749.2 L667.7,748.3 L667.6,747.8 L667.5,747.5 L667.4,747.2 L667.3,746.9 L667.1,746.7 L667.0,746.4 L666.8,746.2 L666.7,746.0 L666.5,745.8 L666.3,745.6 L666.1,745.5 L666.0,745.3 L665.8,745.1 L665.6,745.0 L665.4,744.8 L665.2,744.7 L665.0,744.5 L664.8,744.4 L664.6,744.2 L664.4,744.1 L664.2,744.0 L663.9,743.9 L663.7,743.8 L663.4,743.7 L663.2,743.6 L662.9,743.5 L662.6,743.5 L662.3,743.4 L661.9,743.4 L661.5,743.5 L660.7,743.9 L656.5,747.3 L654.9,748.3 L653.7,748.9 L652.7,749.3 L651.8,749.6 L651.1,749.7 L650.4,749.8 L649.8,749.7 L649.3,749.7 L648.8,749.5 L648.4,749.4 L648.0,749.2 L647.6,748.9 L647.3,748.7 L647.0,748.4 L646.8,748.0 L646.6,747.7 L646.4,747.3 L646.3,746.9 L646.2,746.5 L646.1,746.1 L646.1,745.6 L646.2,745.1 L646.3,744.6 L646.6,744.0 L646.9,743.4 L647.3,742.8 L647.8,742.1 L648.5,741.3 L649.6,740.4 L651.1,739.3 L655.9,736.7 L656.6,736.1 L656.8,735.7 L656.9,735.4 L657.0,735.1 L657.0,734.8 L657.0,734.5 L657.1,734.2 L657.1,734.0 L657.1,733.7 L657.0,733.5 L657.0,733.2 L657.0,733.0 L656.9,732.7 L656.9,732.5 L656.8,732.2 L656.8,732.0 L656.7,731.8 L656.6,731.5 L656.5,731.3 L656.4,731.1 L656.3,730.8 L656.2,730.6 L656.1,730.4 L656.0,730.2 L655.8,729.9 L655.7,729.7 L655.5,729.5 L655.3,729.3 L655.1,729.0 L654.8,728.8 L654.4,728.6 L653.5,728.5 L648.1,728.8 L646.2,728.7 L644.9,728.4 L643.8,728.2 L643.0,727.9 L642.3,727.5 L641.7,727.2 L641.2,726.8 L640.9,726.5 L640.5,726.1 L640.3,725.7 L640.1,725.3 L640.0,724.9 L639.9,724.5 L639.8,724.1 L639.8,723.7 L639.9,723.3 L639.9,722.9 L640.0,722.5 L640.2,722.1 L640.4,721.7 L640.7,721.3 L641.0,721.0 L641.5,720.6 L642.0,720.3 L642.6,720.0 L643.3,719.7 L644.1,719.5 L645.2,719.3 L646.5,719.1 L648.4,719.1 L653.8,719.9 L654.7,719.8 L655.1,719.6 L655.4,719.4 L655.6,719.2 L655.9,719.0 L656.1,718.8 L656.2,718.5 L656.4,718.3 L656.5,718.1 L656.7,717.9 L656.8,717.7 L656.9,717.5 L657.0,717.2 L657.1,717.0 L657.2,716.8 L657.3,716.5 L657.4,716.3 L657.5,716.1 L657.5,715.8 L657.6,715.6 L657.6,715.4 L657.7,715.1 L657.7,714.9 L657.7,714.6 L657.8,714.3 L657.8,714.1 L657.8,713.8 L657.7,713.5 L657.7,713.2 L657.6,712.8 L657.4,712.4 L656.7,711.8 L652.2,708.9 L650.7,707.6 L649.8,706.7 L649.1,705.9 L648.6,705.1 L648.2,704.4 L648.0,703.8 L647.8,703.2 L647.7,702.7 L647.7,702.2 L647.7,701.8 L647.8,701.3 L647.9,700.9 L648.1,700.5 L648.3,700.2 L648.5,699.9 L648.8,699.6 L649.0,699.3 L649.4,699.0 L649.7,698.8 L650.1,698.6 L650.6,698.5 L651.1,698.4 L651.6,698.4 L652.2,698.4 L652.9,698.5 L653.6,698.7 L654.5,699.0 L655.4,699.4 L656.6,700.1 L658.1,701.2 L662.0,705.0 L662.8,705.4 L663.3,705.5 L663.6,705.5 L663.9,705.5 L664.2,705.5 L664.5,705.4 L664.8,705.4 L665.0,705.3 L665.3,705.2 L665.5,705.1 L665.7,705.0 L666.0,704.9 L666.2,704.8 L666.4,704.6 L666.6,704.5 L666.8,704.4 L667.0,704.2 L667.2,704.1 L667.4,703.9 L667.6,703.8 L667.8,703.6 L668.0,703.4 L668.2,703.2 L668.3,703.0 L668.5,702.8 L668.7,702.6 L668.8,702.4 L669.0,702.1 L669.1,701.8 L669.2,701.5 L669.3,701.1 L669.2,700.2 L667.2,695.1 L666.7,693.3 L666.5,692.0 L666.5,690.9 L666.5,690.0 L666.6,689.2 L666.7,688.6 L666.9,688.0 L667.2,687.5 L667.4,687.1 L667.7,686.7 L668.1,686.4 L668.4,686.2 L668.7,686.0 L669.1,685.8 L669.5,685.7 L669.9,685.6 L670.3,685.5 L670.7,685.5 L671.1,685.6 L671.6,685.6 L672.0,685.8 L672.4,686.0 L672.9,686.3 L673.4,686.7 L673.9,687.2 L674.3,687.7 L674.8,688.5 L675.3,689.4 L675.9,690.7 L676.5,692.5 L677.4,697.8 L677.8,698.6 L678.1,698.9 L678.4,699.2 L678.7,699.3 L678.9,699.5 L679.2,699.6 L679.4,699.7 L679.7,699.8 L679.9,699.9 L680.2,699.9 L680.4,700.0 L680.7,700.0 L680.9,700.1 L681.2,700.1 L681.4,700.1 L681.7,700.1 L681.9,700.1 L682.2,700.1 L682.4,700.1 L682.7,700.1 L682.9,700.1 L683.2,700.0 L683.4,700.0 L683.7,699.9 L683.9,699.9 L684.2,699.8 L684.5,699.7 L684.7,699.6 L685.0,699.4 L685.3,699.2 L685.6,698.9 L686.0,698.1 L687.4,692.8 L688.1,691.1 L688.7,689.9 L689.3,689.0 L689.9,688.3 L690.4,687.7 L690.9,687.3 L691.4,687.0 L691.9,686.7 L692.3,686.5 L692.8,686.4 L693.2,686.3 L693.6,686.3 L694.0,686.4 L694.4,686.4 L694.8,686.6 L695.2,686.7 L695.6,686.9 L695.9,687.1 L696.2,687.4 L696.5,687.8 L696.8,688.1 L697.0,688.6 L697.2,689.1 L697.4,689.7 L697.5,690.3 L697.5,691.1 L697.5,692.0 L697.4,693.0 L697.1,694.3 L696.5,696.1 L694.1,701.0 L693.9,701.9 L694.0,702.4 L694.1,702.7 L694.2,703.0 L694.3,703.3 L694.5,703.5 L694.6,703.8 L694.8,704.0 L694.9,704.2 L695.1,704.4 L695.3,704.6 L695.5,704.7 L695.6,704.9 L695.8,705.1 L696.0,705.2 L696.2,705.4 L696.4,705.5 L696.6,705.7 L696.8,705.8 L697.0,706.0 L697.2,706.1 L697.4,706.2 L697.7,706.3 L697.9,706.4 L698.2,706.5 L698.4,706.6 L698.7,706.7 L699.0,706.7 L699.3,706.8 L699.7,706.8 L700.1,706.7 L700.9,706.3 L705.1,702.9 L706.7,701.9 L707.9,701.3 L708.9,700.9 L709.8,700.6 L710.5,700.5 L711.2,700.4 L711.8,700.5 L712.3,700.5 L712.8,700.7 L713.2,700.8 L713.6,701.0 L714.0,701.3 L714.3,701.5 L714.6,701.8 L714.8,702.2 L715.0,702.5 L715.2,702.9 L715.3,703.3 L715.4,703.7 L715.5,704.1 L715.5,704.6 L715.4,705.1 L715.3,705.6 L715.0,706.2 L714.7,706.8 L714.3,707.4 L713.8,708.1 L713.1,708.9 L712.0,709.8 L710.5,710.9 L705.7,713.5 L705.0,714.1 L704.8,714.5 L704.7,714.8 L704.6,715.1 L704.6,715.4 L704.6,715.7 L704.5,716.0 L704.5,716.2 L704.5,716.5 L704.6,716.7 L704.6,717.0 L704.6,717.2 L704.7,717.5 L704.7,717.7 L704.8,718.0 L704.8,718.2 L704.9,718.4 L705.0,718.7 L705.1,718.9 L705.2,719.1 L705.3,719.4 L705.4,719.6 L705.5,719.8 L705.6,720.0 L705.8,720.3 L705.9,720.5 L706.1,720.7 L706.3,720.9 L706.5,721.2 L706.8,721.4 L707.2,721.6 L708.1,721.7 L713.5,721.4 L715.4,721.5 L716.7,721.8 L717.8,722.0 L718.6,722.3 L719.3,722.7 L719.9,723.0 L720.4,723.4 L720.7,723.7 L721.1,724.1 L721.3,724.5 L721.5,724.9 L721.6,725.3 L721.7,725.7 L721.8,726.1 L721.8,726.5Z" fill="none" stroke="#000" stroke-width="2" stroke-linejoin="round"/>
<path d="M684.6,729.1 L702.0,732.5 A22.5,22.5 0 0 1 686.7,746.8 Z" fill="none" stroke="#000" stroke-width="2" stroke-linejoin="round"/>
<path d="M678.1,729.9 L680.3,747.6 A22.5,22.5 0 0 1 662.0,737.5 Z" fill="none" stroke="#000" stroke-width="2" stroke-linejoin="round"/>
<path d="M675.4,724.0 L659.2,731.6 A22.5,22.5 0 0 1 663.2,711.0 Z" fill="none" stroke="#000" stroke-width="2" stroke-linejoin="round"/>
<path d="M680.1,719.6 L668.0,706.6 A22.5,22.5 0 0 1 688.8,704.1 Z" fill="none" stroke="#000" stroke-width="2" stroke-linejoin="round"/>
<path d="M685.8,722.8 L694.4,707.2 A22.5,22.5 0 0 1 703.3,726.2 Z" fill="none" stroke="#000" stroke-width="2" stroke-linejoin="round"/>
<circle cx="680.8" cy="725.1" r="3.6" fill="none" stroke="#000" stroke-width="1.8"/>
<path d="M759.7,686.2 L760.1,686.2 L760.5,686.1 L760.9,686.1 L761.3,686.2 L761.7,686.3 L762.1,686.5 L762.6,686.7 L763.0,687.0 L763.5,687.4 L763.9,687.8 L764.3,688.4 L764.8,689.2 L765.3,690.1 L765.7,691.3 L766.2,693.1 L766.9,698.3 L767.2,699.1 L767.5,699.4 L767.7,699.7 L768.0,699.9 L768.3,700.0 L768.5,700.2 L768.8,700.3 L769.0,700.4 L769.3,700.5 L769.5,700.5 L769.8,700.6 L770.0,700.6 L770.2,700.7 L770.5,700.7 L770.7,700.8 L771.0,700.8 L771.2,700.8 L771.5,700.8 L771.7,700.8 L772.0,700.8 L772.2,700.8 L772.5,700.8 L772.7,700.8 L773.0,700.7 L773.2,700.7 L773.5,700.6 L773.8,700.5 L774.1,700.4 L774.4,700.3 L774.7,700.1 L775.0,699.8 L775.5,699.0 L777.0,694.0 L777.8,692.4 L778.5,691.3 L779.1,690.4 L779.7,689.8 L780.2,689.3 L780.7,688.9 L781.2,688.6 L781.7,688.4 L782.2,688.2 L782.6,688.1 L783.0,688.1 L783.5,688.1 L783.9,688.2 L784.3,688.3 L784.6,688.4 L785.0,688.6 L785.3,688.8 L785.7,689.0 L786.0,689.3 L786.2,689.7 L786.5,690.0 L786.7,690.5 L786.9,691.0 L787.0,691.6 L787.1,692.2 L787.1,692.9 L787.0,693.8 L786.9,694.8 L786.5,696.1 L785.9,697.8 L783.4,702.4 L783.1,703.3 L783.2,703.7 L783.2,704.0 L783.3,704.3 L783.5,704.6 L783.6,704.9 L783.7,705.1 L783.9,705.3 L784.0,705.5 L784.2,705.8 L784.3,706.0 L784.5,706.1 L784.7,706.3 L784.8,706.5 L785.0,706.7 L785.2,706.8 L785.4,707.0 L785.6,707.1 L785.8,707.3 L786.0,707.4 L786.2,707.6 L786.4,707.7 L786.6,707.8 L786.9,707.9 L787.1,708.1 L787.4,708.2 L787.6,708.2 L787.9,708.3 L788.2,708.4 L788.6,708.4 L789.0,708.4 L789.9,708.0 L794.1,704.9 L795.7,704.0 L796.9,703.5 L797.9,703.2 L798.7,703.0 L799.4,702.9 L800.1,702.9 L800.7,703.0 L801.2,703.1 L801.7,703.2 L802.1,703.4 L802.4,703.6 L802.8,703.9 L803.0,704.2 L803.3,704.5 L803.5,704.8 L803.7,705.2 L803.9,705.6 L804.0,705.9 L804.1,706.4 L804.1,706.8 L804.1,707.2 L804.0,707.7 L803.8,708.2 L803.6,708.8 L803.3,709.3 L802.9,710.0 L802.3,710.6 L801.6,711.3 L800.5,712.1 L799.0,713.1 L794.3,715.4 L793.6,716.0 L793.4,716.3 L793.2,716.7 L793.1,717.0 L793.1,717.3 L793.0,717.5 L793.0,717.8 L793.0,718.1 L793.0,718.3 L793.0,718.6 L793.0,718.9 L793.0,719.1 L793.0,719.4 L793.1,719.6 L793.1,719.8 L793.2,720.1 L793.2,720.3 L793.3,720.6 L793.4,720.8 L793.4,721.0 L793.5,721.3 L793.6,721.5 L793.7,721.7 L793.9,722.0 L794.0,722.2 L794.1,722.4 L794.3,722.7 L794.5,722.9 L794.7,723.1 L795.0,723.4 L795.3,723.6 L796.2,723.8 L801.5,723.7 L803.3,724.0 L804.5,724.3 L805.5,724.6 L806.3,724.9 L807.0,725.3 L807.5,725.7 L807.9,726.0 L808.3,726.4 L808.6,726.8 L808.8,727.2 L809.0,727.6 L809.1,728.0 L809.1,728.4 L809.2,728.8 L809.1,729.2 L809.1,729.6 L809.0,730.0 L808.9,730.4 L808.7,730.8 L808.5,731.1 L808.2,731.5 L807.8,731.8 L807.4,732.2 L806.9,732.5 L806.3,732.7 L805.6,733.0 L804.8,733.2 L803.8,733.3 L802.5,733.4 L800.6,733.3 L795.5,732.4 L794.6,732.4 L794.2,732.6 L793.9,732.7 L793.6,732.9 L793.4,733.1 L793.2,733.3 L793.0,733.5 L792.8,733.7 L792.7,733.9 L792.5,734.2 L792.4,734.4 L792.3,734.6 L792.1,734.8 L792.0,735.0 L791.9,735.2 L791.8,735.5 L791.7,735.7 L791.6,735.9 L791.6,736.2 L791.5,736.4 L791.4,736.6 L791.4,736.9 L791.3,737.1 L791.3,737.4 L791.2,737.7 L791.2,737.9 L791.2,738.2 L791.2,738.5 L791.3,738.8 L791.4,739.2 L791.5,739.6 L792.1,740.3 L796.4,743.3 L797.7,744.6 L798.6,745.5 L799.2,746.4 L799.6,747.1 L799.9,747.8 L800.1,748.4 L800.3,749.0 L800.3,749.5 L800.3,750.0 L800.3,750.5 L800.2,750.9 L800.0,751.3 L799.8,751.6 L799.6,752.0 L799.4,752.3 L799.1,752.6 L798.8,752.8 L798.5,753.1 L798.1,753.3 L797.7,753.4 L797.2,753.5 L796.8,753.6 L796.2,753.6 L795.7,753.6 L795.0,753.4 L794.3,753.2 L793.5,752.9 L792.6,752.4 L791.5,751.7 L790.1,750.6 L786.5,746.8 L785.7,746.3 L785.3,746.2 L784.9,746.1 L784.6,746.1 L784.3,746.2 L784.0,746.2 L783.8,746.3 L783.5,746.3 L783.3,746.4 L783.0,746.5 L782.8,746.6 L782.6,746.7 L782.3,746.8 L782.1,746.9 L781.9,747.0 L781.7,747.1 L781.5,747.3 L781.3,747.4 L781.1,747.5 L780.9,747.7 L780.7,747.8 L780.5,748.0 L780.3,748.2 L780.1,748.4 L779.9,748.6 L779.7,748.8 L779.6,749.0 L779.4,749.3 L779.3,749.5 L779.1,749.9 L779.0,750.3 L779.1,751.2 L780.8,756.2 L781.1,758.0 L781.2,759.3 L781.2,760.3 L781.1,761.1 L781.0,761.9 L780.8,762.5 L780.6,763.0 L780.3,763.5 L780.0,763.9 L779.7,764.2 L779.4,764.5 L779.0,764.7 L778.7,764.9 L778.3,765.1 L777.9,765.2 L777.5,765.2 L777.1,765.3 L776.7,765.3 L776.3,765.2 L775.9,765.1 L775.5,764.9 L775.0,764.7 L774.6,764.4 L774.1,764.0 L773.7,763.6 L773.3,763.0 L772.8,762.2 L772.3,761.3 L771.9,760.1 L771.4,758.3 L770.7,753.1 L770.4,752.3 L770.1,752.0 L769.9,751.7 L769.6,751.5 L769.3,751.4 L769.1,751.2 L768.8,751.1 L768.6,751.0 L768.3,750.9 L768.1,750.9 L767.8,750.8 L767.6,750.8 L767.4,750.7 L767.1,750.7 L766.9,750.6 L766.6,750.6 L766.4,750.6 L766.1,750.6 L765.9,750.6 L765.6,750.6 L765.4,750.6 L765.1,750.6 L764.9,750.6 L764.6,750.7 L764.4,750.7 L764.1,750.8 L763.8,750.9 L763.5,751.0 L763.2,751.1 L762.9,751.3 L762.6,751.6 L762.1,752.4 L760.6,757.4 L759.8,759.0 L759.1,760.1 L758.5,761.0 L757.9,761.6 L757.4,762.1 L756.9,762.5 L756.4,762.8 L755.9,763.0 L755.4,763.2 L755.0,763.3 L754.6,763.3 L754.1,763.3 L753.7,763.2 L753.3,763.1 L753.0,763.0 L752.6,762.8 L752.3,762.6 L751.9,762.4 L751.6,762.1 L751.4,761.7 L751.1,761.4 L750.9,760.9 L750.7,760.4 L750.6,759.8 L750.5,759.2 L750.5,758.5 L750.6,757.6 L750.7,756.6 L751.1,755.3 L751.7,753.6 L754.2,749.0 L754.5,748.1 L754.4,747.7 L754.4,747.4 L754.3,747.1 L754.1,746.8 L754.0,746.5 L753.9,746.3 L753.7,746.1 L753.6,745.9 L753.4,745.6 L753.3,745.4 L753.1,745.3 L752.9,745.1 L752.8,744.9 L752.6,744.7 L752.4,744.6 L752.2,744.4 L752.0,744.3 L751.8,744.1 L751.6,744.0 L751.4,743.8 L751.2,743.7 L751.0,743.6 L750.7,743.5 L750.5,743.3 L750.2,743.2 L750.0,743.2 L749.7,743.1 L749.4,743.0 L749.0,743.0 L748.6,743.0 L747.7,743.4 L743.5,746.5 L741.9,747.4 L740.7,747.9 L739.7,748.2 L738.9,748.4 L738.2,748.5 L737.5,748.5 L736.9,748.4 L736.4,748.3 L735.9,748.2 L735.5,748.0 L735.2,747.8 L734.8,747.5 L734.6,747.2 L734.3,746.9 L734.1,746.6 L733.9,746.2 L733.7,745.8 L733.6,745.5 L733.5,745.0 L733.5,744.6 L733.5,744.2 L733.6,743.7 L733.8,743.2 L734.0,742.6 L734.3,742.1 L734.7,741.4 L735.3,740.8 L736.0,740.1 L737.1,739.3 L738.6,738.3 L743.3,736.0 L744.0,735.4 L744.2,735.1 L744.4,734.7 L744.5,734.4 L744.5,734.1 L744.6,733.9 L744.6,733.6 L744.6,733.3 L744.6,733.1 L744.6,732.8 L744.6,732.5 L744.6,732.3 L744.6,732.0 L744.5,731.8 L744.5,731.6 L744.4,731.3 L744.4,731.1 L744.3,730.8 L744.2,730.6 L744.2,730.4 L744.1,730.1 L744.0,729.9 L743.9,729.7 L743.7,729.4 L743.6,729.2 L743.5,729.0 L743.3,728.7 L743.1,728.5 L742.9,728.3 L742.6,728.0 L742.3,727.8 L741.4,727.6 L736.1,727.7 L734.3,727.4 L733.1,727.1 L732.1,726.8 L731.3,726.5 L730.6,726.1 L730.1,725.7 L729.7,725.4 L729.3,725.0 L729.0,724.6 L728.8,724.2 L728.6,723.8 L728.5,723.4 L728.5,723.0 L728.4,722.6 L728.5,722.2 L728.5,721.8 L728.6,721.4 L728.7,721.0 L728.9,720.6 L729.1,720.3 L729.4,719.9 L729.8,719.6 L730.2,719.2 L730.7,718.9 L731.3,718.7 L732.0,718.4 L732.8,718.2 L733.8,718.1 L735.1,718.0 L737.0,718.1 L742.1,719.0 L743.0,719.0 L743.4,718.8 L743.7,718.7 L744.0,718.5 L744.2,718.3 L744.4,718.1 L744.6,717.9 L744.8,717.7 L744.9,717.5 L745.1,717.2 L745.2,717.0 L745.3,716.8 L745.5,716.6 L745.6,716.4 L745.7,716.2 L745.8,715.9 L745.9,715.7 L746.0,715.5 L746.0,715.2 L746.1,715.0 L746.2,714.8 L746.2,714.5 L746.3,714.3 L746.3,714.0 L746.4,713.7 L746.4,713.5 L746.4,713.2 L746.4,712.9 L746.3,712.6 L746.2,712.2 L746.1,711.8 L745.5,711.1 L741.2,708.1 L739.9,706.8 L739.0,705.9 L738.4,705.0 L738.0,704.3 L737.7,703.6 L737.5,703.0 L737.3,702.4 L737.3,701.9 L737.3,701.4 L737.3,700.9 L737.4,700.5 L737.6,700.1 L737.8,699.8 L738.0,699.4 L738.2,699.1 L738.5,698.8 L738.8,698.6 L739.1,698.3 L739.5,698.1 L739.9,698.0 L740.4,697.9 L740.8,697.8 L741.4,697.8 L741.9,697.8 L742.6,698.0 L743.3,698.2 L744.1,698.5 L745.0,699.0 L746.1,699.7 L747.5,700.8 L751.1,704.6 L751.9,705.1 L752.3,705.2 L752.7,705.3 L753.0,705.3 L753.3,705.2 L753.6,705.2 L753.8,705.1 L754.1,705.1 L754.3,705.0 L754.6,704.9 L754.8,704.8 L755.0,704.7 L755.3,704.6 L755.5,704.5 L755.7,704.4 L755.9,704.3 L756.1,704.1 L756.3,704.0 L756.5,703.9 L756.7,703.7 L756.9,703.6 L757.1,703.4 L757.3,703.2 L757.5,703.0 L757.7,702.8 L757.9,702.6 L758.0,702.4 L758.2,702.1 L758.3,701.9 L758.5,701.5 L758.6,701.1 L758.5,700.2 L756.8,695.2 L756.5,693.4 L756.4,692.1 L756.4,691.1 L756.5,690.3 L756.6,689.5 L756.8,688.9 L757.0,688.4 L757.3,687.9 L757.6,687.5 L757.9,687.2 L758.2,686.9 L758.6,686.7 L758.9,686.5 L759.3,686.3 L759.7,686.2Z" fill="none" stroke="#000" stroke-width="2" stroke-linejoin="round"/>
<path d="M770.8,723.3 L769.1,703.2 A22.5,22.5 0 0 1 790.9,721.5 Z" fill="none" stroke="#000" stroke-width="2" stroke-linejoin="round"/>
<path d="M771.2,727.7 L791.3,726.0 A22.5,22.5 0 0 1 773.0,747.8 Z" fill="none" stroke="#000" stroke-width="2" stroke-linejoin="round"/>
<path d="M766.8,728.1 L768.5,748.2 A22.5,22.5 0 0 1 746.7,729.9 Z" fill="none" stroke="#000" stroke-width="2" stroke-linejoin="round"/>
<path d="M766.4,723.7 L746.3,725.4 A22.5,22.5 0 0 1 764.6,703.6 Z" fill="none" stroke="#000" stroke-width="2" stroke-linejoin="round"/>
<circle cx="768.8" cy="725.7" r="3.7" fill="none" stroke="#000" stroke-width="1.8"/>
<path d="M866.4,641.8 L866.8,641.7 L867.2,641.7 L867.5,641.7 L867.9,641.7 L868.3,641.8 L868.7,641.9 L869.1,642.0 L869.5,642.2 L869.9,642.5 L870.3,642.8 L870.8,643.2 L871.2,643.6 L871.6,644.2 L872.1,644.9 L872.5,645.8 L873.0,647.1 L873.5,649.4 L874.1,652.6 L874.5,652.9 L874.8,653.2 L875.1,653.4 L875.4,653.5 L875.7,653.7 L876.0,653.8 L876.3,653.8 L876.6,653.9 L876.9,654.0 L877.2,654.0 L877.5,654.1 L877.8,654.1 L878.1,654.1 L878.4,654.1 L878.7,654.1 L879.0,654.1 L879.3,654.1 L879.6,654.0 L879.9,654.0 L880.2,653.9 L880.5,653.8 L880.8,653.8 L881.1,653.7 L881.4,653.5 L881.7,653.4 L882.0,653.2 L882.3,652.9 L882.7,652.6 L883.3,649.4 L883.8,647.1 L884.3,645.8 L884.7,644.9 L885.2,644.2 L885.6,643.6 L886.0,643.2 L886.5,642.8 L886.9,642.5 L887.3,642.2 L887.7,642.0 L888.1,641.9 L888.5,641.8 L888.9,641.7 L889.3,641.7 L889.6,641.7 L890.0,641.7 L890.4,641.8 L890.8,641.9 L891.1,642.0 L891.5,642.1 L891.8,642.3 L892.2,642.5 L892.5,642.7 L892.8,643.0 L893.1,643.4 L893.4,643.8 L893.7,644.2 L893.9,644.7 L894.1,645.3 L894.3,646.0 L894.4,646.8 L894.5,647.9 L894.4,649.2 L894.1,651.5 L893.4,654.7 L893.6,655.2 L893.8,655.5 L894.0,655.8 L894.2,656.1 L894.5,656.3 L894.7,656.5 L895.0,656.7 L895.2,656.9 L895.5,657.1 L895.7,657.2 L896.0,657.4 L896.2,657.5 L896.5,657.6 L896.8,657.8 L897.0,657.9 L897.3,658.0 L897.6,658.1 L897.9,658.1 L898.2,658.2 L898.5,658.3 L898.8,658.3 L899.1,658.3 L899.4,658.4 L899.7,658.4 L900.1,658.3 L900.5,658.3 L900.8,658.2 L901.3,658.0 L903.1,655.3 L904.5,653.4 L905.4,652.4 L906.1,651.7 L906.8,651.2 L907.4,650.8 L908.0,650.6 L908.5,650.4 L909.0,650.2 L909.5,650.2 L910.0,650.1 L910.4,650.2 L910.8,650.2 L911.2,650.3 L911.6,650.4 L911.9,650.6 L912.2,650.8 L912.6,651.0 L912.9,651.2 L913.2,651.4 L913.4,651.7 L913.7,652.0 L913.9,652.3 L914.1,652.7 L914.3,653.0 L914.5,653.5 L914.6,653.9 L914.7,654.5 L914.7,655.0 L914.6,655.7 L914.5,656.4 L914.4,657.2 L914.0,658.1 L913.5,659.4 L912.2,661.4 L910.4,664.0 L910.4,664.6 L910.4,665.0 L910.5,665.3 L910.6,665.6 L910.8,665.9 L910.9,666.2 L911.1,666.5 L911.2,666.8 L911.4,667.0 L911.6,667.3 L911.7,667.5 L911.9,667.7 L912.1,667.9 L912.3,668.2 L912.6,668.4 L912.8,668.6 L913.0,668.8 L913.2,668.9 L913.5,669.1 L913.7,669.3 L914.0,669.4 L914.3,669.6 L914.6,669.7 L914.9,669.9 L915.2,670.0 L915.5,670.1 L915.9,670.1 L916.5,670.1 L919.1,668.3 L921.1,667.0 L922.4,666.5 L923.3,666.1 L924.1,666.0 L924.8,665.9 L925.5,665.8 L926.0,665.8 L926.6,665.9 L927.0,666.0 L927.5,666.2 L927.8,666.4 L928.2,666.6 L928.5,666.8 L928.8,667.1 L929.1,667.3 L929.3,667.6 L929.5,667.9 L929.7,668.3 L929.9,668.6 L930.1,668.9 L930.2,669.3 L930.3,669.7 L930.3,670.1 L930.4,670.5 L930.3,671.0 L930.3,671.5 L930.1,672.0 L929.9,672.5 L929.7,673.1 L929.3,673.7 L928.8,674.4 L928.1,675.1 L927.1,676.0 L925.2,677.4 L922.5,679.2 L922.3,679.7 L922.2,680.0 L922.2,680.4 L922.1,680.8 L922.1,681.1 L922.2,681.4 L922.2,681.7 L922.2,682.0 L922.3,682.3 L922.4,682.6 L922.4,682.9 L922.5,683.2 L922.6,683.5 L922.7,683.7 L922.9,684.0 L923.0,684.3 L923.1,684.5 L923.3,684.8 L923.4,685.0 L923.6,685.3 L923.8,685.5 L924.0,685.8 L924.2,686.0 L924.4,686.3 L924.7,686.5 L925.0,686.7 L925.3,686.9 L925.8,687.1 L929.0,686.4 L931.3,686.1 L932.6,686.0 L933.7,686.1 L934.5,686.2 L935.2,686.4 L935.8,686.6 L936.3,686.8 L936.7,687.1 L937.1,687.4 L937.5,687.7 L937.8,688.0 L938.0,688.3 L938.2,688.7 L938.4,689.0 L938.5,689.4 L938.6,689.7 L938.7,690.1 L938.8,690.5 L938.8,690.9 L938.8,691.2 L938.8,691.6 L938.7,692.0 L938.6,692.4 L938.5,692.8 L938.3,693.2 L938.0,693.6 L937.7,694.0 L937.3,694.5 L936.9,694.9 L936.3,695.3 L935.6,695.8 L934.7,696.2 L933.4,696.7 L931.1,697.2 L927.9,697.8 L927.6,698.2 L927.3,698.5 L927.1,698.8 L927.0,699.1 L926.8,699.4 L926.7,699.7 L926.7,700.0 L926.6,700.3 L926.5,700.6 L926.5,700.9 L926.4,701.2 L926.4,701.5 L926.4,701.8 L926.4,702.1 L926.4,702.4 L926.4,702.7 L926.4,703.0 L926.5,703.3 L926.5,703.6 L926.6,703.9 L926.7,704.2 L926.7,704.5 L926.8,704.8 L927.0,705.1 L927.1,705.4 L927.3,705.7 L927.6,706.0 L927.9,706.4 L931.1,707.0 L933.4,707.5 L934.7,708.0 L935.6,708.4 L936.3,708.9 L936.9,709.3 L937.3,709.7 L937.7,710.2 L938.0,710.6 L938.3,711.0 L938.5,711.4 L938.6,711.8 L938.7,712.2 L938.8,712.6 L938.8,713.0 L938.8,713.3 L938.8,713.7 L938.7,714.1 L938.6,714.5 L938.5,714.8 L938.4,715.2 L938.2,715.5 L938.0,715.9 L937.8,716.2 L937.5,716.5 L937.1,716.8 L936.7,717.1 L936.3,717.4 L935.8,717.6 L935.2,717.8 L934.5,718.0 L933.7,718.1 L932.6,718.2 L931.3,718.1 L929.0,717.8 L925.8,717.1 L925.3,717.3 L925.0,717.5 L924.7,717.7 L924.4,717.9 L924.2,718.2 L924.0,718.4 L923.8,718.7 L923.6,718.9 L923.4,719.2 L923.3,719.4 L923.1,719.7 L923.0,719.9 L922.9,720.2 L922.7,720.5 L922.6,720.7 L922.5,721.0 L922.4,721.3 L922.4,721.6 L922.3,721.9 L922.2,722.2 L922.2,722.5 L922.2,722.8 L922.1,723.1 L922.1,723.4 L922.2,723.8 L922.2,724.2 L922.3,724.5 L922.5,725.0 L925.2,726.8 L927.1,728.2 L928.1,729.1 L928.8,729.8 L929.3,730.5 L929.7,731.1 L929.9,731.7 L930.1,732.2 L930.3,732.7 L930.3,733.2 L930.4,733.7 L930.3,734.1 L930.3,734.5 L930.2,734.9 L930.1,735.3 L929.9,735.6 L929.7,735.9 L929.5,736.3 L929.3,736.6 L929.1,736.9 L928.8,737.1 L928.5,737.4 L928.2,737.6 L927.8,737.8 L927.5,738.0 L927.0,738.2 L926.6,738.3 L926.0,738.4 L925.5,738.4 L924.8,738.3 L924.1,738.2 L923.3,738.1 L922.4,737.7 L921.1,737.2 L919.1,735.9 L916.5,734.1 L915.9,734.1 L915.5,734.1 L915.2,734.2 L914.9,734.3 L914.6,734.5 L914.3,734.6 L914.0,734.8 L913.7,734.9 L913.5,735.1 L913.2,735.3 L913.0,735.4 L912.8,735.6 L912.6,735.8 L912.3,736.0 L912.1,736.3 L911.9,736.5 L911.7,736.7 L911.6,736.9 L911.4,737.2 L911.2,737.4 L911.1,737.7 L910.9,738.0 L910.8,738.3 L910.6,738.6 L910.5,738.9 L910.4,739.2 L910.4,739.6 L910.4,740.2 L912.2,742.8 L913.5,744.8 L914.0,746.1 L914.4,747.0 L914.5,747.8 L914.6,748.5 L914.7,749.2 L914.7,749.7 L914.6,750.3 L914.5,750.7 L914.3,751.2 L914.1,751.5 L913.9,751.9 L913.7,752.2 L913.4,752.5 L913.2,752.8 L912.9,753.0 L912.6,753.2 L912.2,753.4 L911.9,753.6 L911.6,753.8 L911.2,753.9 L910.8,754.0 L910.4,754.0 L910.0,754.1 L909.5,754.0 L909.0,754.0 L908.5,753.8 L908.0,753.6 L907.4,753.4 L906.8,753.0 L906.1,752.5 L905.4,751.8 L904.5,750.8 L903.1,748.9 L901.3,746.2 L900.8,746.0 L900.5,745.9 L900.1,745.9 L899.7,745.8 L899.4,745.8 L899.1,745.9 L898.8,745.9 L898.5,745.9 L898.2,746.0 L897.9,746.1 L897.6,746.1 L897.3,746.2 L897.0,746.3 L896.8,746.4 L896.5,746.6 L896.2,746.7 L896.0,746.8 L895.7,747.0 L895.5,747.1 L895.2,747.3 L895.0,747.5 L894.7,747.7 L894.5,747.9 L894.2,748.1 L894.0,748.4 L893.8,748.7 L893.6,749.0 L893.4,749.5 L894.1,752.7 L894.4,755.0 L894.5,756.3 L894.4,757.4 L894.3,758.2 L894.1,758.9 L893.9,759.5 L893.7,760.0 L893.4,760.4 L893.1,760.8 L892.8,761.2 L892.5,761.5 L892.2,761.7 L891.8,761.9 L891.5,762.1 L891.1,762.2 L890.8,762.3 L890.4,762.4 L890.0,762.5 L889.6,762.5 L889.3,762.5 L888.9,762.5 L888.5,762.4 L888.1,762.3 L887.7,762.2 L887.3,762.0 L886.9,761.7 L886.5,761.4 L886.0,761.0 L885.6,760.6 L885.2,760.0 L884.7,759.3 L884.3,758.4 L883.8,757.1 L883.3,754.8 L882.7,751.6 L882.3,751.3 L882.0,751.0 L881.7,750.8 L881.4,750.7 L881.1,750.5 L880.8,750.4 L880.5,750.4 L880.2,750.3 L879.9,750.2 L879.6,750.2 L879.3,750.1 L879.0,750.1 L878.7,750.1 L878.4,750.1 L878.1,750.1 L877.8,750.1 L877.5,750.1 L877.2,750.2 L876.9,750.2 L876.6,750.3 L876.3,750.4 L876.0,750.4 L875.7,750.5 L875.4,750.7 L875.1,750.8 L874.8,751.0 L874.5,751.3 L874.1,751.6 L873.5,754.8 L873.0,757.1 L872.5,758.4 L872.1,759.3 L871.6,760.0 L871.2,760.6 L870.8,761.0 L870.3,761.4 L869.9,761.7 L869.5,762.0 L869.1,762.2 L868.7,762.3 L868.3,762.4 L867.9,762.5 L867.5,762.5 L867.2,762.5 L866.8,762.5 L866.4,762.4 L866.0,762.3 L865.7,762.2 L865.3,762.1 L865.0,761.9 L864.6,761.7 L864.3,761.5 L864.0,761.2 L863.7,760.8 L863.4,760.4 L863.1,760.0 L862.9,759.5 L862.7,758.9 L862.5,758.2 L862.4,757.4 L862.3,756.3 L862.4,755.0 L862.7,752.7 L863.4,749.5 L863.2,749.0 L863.0,748.7 L862.8,748.4 L862.6,748.1 L862.3,747.9 L862.1,747.7 L861.8,747.5 L861.6,747.3 L861.3,747.1 L861.1,747.0 L860.8,746.8 L860.6,746.7 L860.3,746.6 L860.0,746.4 L859.8,746.3 L859.5,746.2 L859.2,746.1 L858.9,746.1 L858.6,746.0 L858.3,745.9 L858.0,745.9 L857.7,745.9 L857.4,745.8 L857.1,745.8 L856.7,745.9 L856.3,745.9 L856.0,746.0 L855.5,746.2 L853.7,748.9 L852.3,750.8 L851.4,751.8 L850.7,752.5 L850.0,753.0 L849.4,753.4 L848.8,753.6 L848.3,753.8 L847.8,754.0 L847.3,754.0 L846.8,754.1 L846.4,754.0 L846.0,754.0 L845.6,753.9 L845.2,753.8 L844.9,753.6 L844.6,753.4 L844.2,753.2 L843.9,753.0 L843.6,752.8 L843.4,752.5 L843.1,752.2 L842.9,751.9 L842.7,751.5 L842.5,751.2 L842.3,750.7 L842.2,750.3 L842.1,749.7 L842.1,749.2 L842.2,748.5 L842.3,747.8 L842.4,747.0 L842.8,746.1 L843.3,744.8 L844.6,742.8 L846.4,740.2 L846.4,739.6 L846.4,739.2 L846.3,738.9 L846.2,738.6 L846.0,738.3 L845.9,738.0 L845.7,737.7 L845.6,737.4 L845.4,737.2 L845.2,736.9 L845.1,736.7 L844.9,736.5 L844.7,736.3 L844.5,736.0 L844.2,735.8 L844.0,735.6 L843.8,735.4 L843.6,735.3 L843.3,735.1 L843.1,734.9 L842.8,734.8 L842.5,734.6 L842.2,734.5 L841.9,734.3 L841.6,734.2 L841.3,734.1 L840.9,734.1 L840.3,734.1 L837.7,735.9 L835.7,737.2 L834.4,737.7 L833.5,738.1 L832.7,738.2 L832.0,738.3 L831.3,738.4 L830.8,738.4 L830.2,738.3 L829.8,738.2 L829.3,738.0 L829.0,737.8 L828.6,737.6 L828.3,737.4 L828.0,737.1 L827.7,736.9 L827.5,736.6 L827.3,736.3 L827.1,735.9 L826.9,735.6 L826.7,735.3 L826.6,734.9 L826.5,734.5 L826.5,734.1 L826.4,733.7 L826.5,733.2 L826.5,732.7 L826.7,732.2 L826.9,731.7 L827.1,731.1 L827.5,730.5 L828.0,729.8 L828.7,729.1 L829.7,728.2 L831.6,726.8 L834.3,725.0 L834.5,724.5 L834.6,724.2 L834.6,723.8 L834.7,723.4 L834.7,723.1 L834.6,722.8 L834.6,722.5 L834.6,722.2 L834.5,721.9 L834.4,721.6 L834.4,721.3 L834.3,721.0 L834.2,720.7 L834.1,720.5 L833.9,720.2 L833.8,719.9 L833.7,719.7 L833.5,719.4 L833.4,719.2 L833.2,718.9 L833.0,718.7 L832.8,718.4 L832.6,718.2 L832.4,717.9 L832.1,717.7 L831.8,717.5 L831.5,717.3 L831.0,717.1 L827.8,717.8 L825.5,718.1 L824.2,718.2 L823.1,718.1 L822.3,718.0 L821.6,717.8 L821.0,717.6 L820.5,717.4 L820.1,717.1 L819.7,716.8 L819.3,716.5 L819.0,716.2 L818.8,715.9 L818.6,715.5 L818.4,715.2 L818.3,714.8 L818.2,714.5 L818.1,714.1 L818.0,713.7 L818.0,713.3 L818.0,713.0 L818.0,712.6 L818.1,712.2 L818.2,711.8 L818.3,711.4 L818.5,711.0 L818.8,710.6 L819.1,710.2 L819.5,709.7 L819.9,709.3 L820.5,708.9 L821.2,708.4 L822.1,708.0 L823.4,707.5 L825.7,707.0 L828.9,706.4 L829.2,706.0 L829.5,705.7 L829.7,705.4 L829.8,705.1 L830.0,704.8 L830.1,704.5 L830.1,704.2 L830.2,703.9 L830.3,703.6 L830.3,703.3 L830.4,703.0 L830.4,702.7 L830.4,702.4 L830.4,702.1 L830.4,701.8 L830.4,701.5 L830.4,701.2 L830.3,700.9 L830.3,700.6 L830.2,700.3 L830.1,700.0 L830.1,699.7 L830.0,699.4 L829.8,699.1 L829.7,698.8 L829.5,698.5 L829.2,698.2 L828.9,697.8 L825.7,697.2 L823.4,696.7 L822.1,696.2 L821.2,695.8 L820.5,695.3 L819.9,694.9 L819.5,694.5 L819.1,694.0 L818.8,693.6 L818.5,693.2 L818.3,692.8 L818.2,692.4 L818.1,692.0 L818.0,691.6 L818.0,691.2 L818.0,690.9 L818.0,690.5 L818.1,690.1 L818.2,689.7 L818.3,689.4 L818.4,689.0 L818.6,688.7 L818.8,688.3 L819.0,688.0 L819.3,687.7 L819.7,687.4 L820.1,687.1 L820.5,686.8 L821.0,686.6 L821.6,686.4 L822.3,686.2 L823.1,686.1 L824.2,686.0 L825.5,686.1 L827.8,686.4 L831.0,687.1 L831.5,686.9 L831.8,686.7 L832.1,686.5 L832.4,686.3 L832.6,686.0 L832.8,685.8 L833.0,685.5 L833.2,685.3 L833.4,685.0 L833.5,684.8 L833.7,684.5 L833.8,684.3 L833.9,684.0 L834.1,683.7 L834.2,683.5 L834.3,683.2 L834.4,682.9 L834.4,682.6 L834.5,682.3 L834.6,682.0 L834.6,681.7 L834.6,681.4 L834.7,681.1 L834.7,680.8 L834.6,680.4 L834.6,680.0 L834.5,679.7 L834.3,679.2 L831.6,677.4 L829.7,676.0 L828.7,675.1 L828.0,674.4 L827.5,673.7 L827.1,673.1 L826.9,672.5 L826.7,672.0 L826.5,671.5 L826.5,671.0 L826.4,670.5 L826.5,670.1 L826.5,669.7 L826.6,669.3 L826.7,668.9 L826.9,668.6 L827.1,668.3 L827.3,667.9 L827.5,667.6 L827.7,667.3 L828.0,667.1 L828.3,666.8 L828.6,666.6 L829.0,666.4 L829.3,666.2 L829.8,666.0 L830.2,665.9 L830.8,665.8 L831.3,665.8 L832.0,665.9 L832.7,666.0 L833.5,666.1 L834.4,666.5 L835.7,667.0 L837.7,668.3 L840.3,670.1 L840.9,670.1 L841.3,670.1 L841.6,670.0 L841.9,669.9 L842.2,669.7 L842.5,669.6 L842.8,669.4 L843.1,669.3 L843.3,669.1 L843.6,668.9 L843.8,668.8 L844.0,668.6 L844.2,668.4 L844.5,668.2 L844.7,667.9 L844.9,667.7 L845.1,667.5 L845.2,667.3 L845.4,667.0 L845.6,666.8 L845.7,666.5 L845.9,666.2 L846.0,665.9 L846.2,665.6 L846.3,665.3 L846.4,665.0 L846.4,664.6 L846.4,664.0 L844.6,661.4 L843.3,659.4 L842.8,658.1 L842.4,657.2 L842.3,656.4 L842.2,655.7 L842.1,655.0 L842.1,654.5 L842.2,653.9 L842.3,653.5 L842.5,653.0 L842.7,652.7 L842.9,652.3 L843.1,652.0 L843.4,651.7 L843.6,651.4 L843.9,651.2 L844.2,651.0 L844.6,650.8 L844.9,650.6 L845.2,650.4 L845.6,650.3 L846.0,650.2 L846.4,650.2 L846.8,650.1 L847.3,650.2 L847.8,650.2 L848.3,650.4 L848.8,650.6 L849.4,650.8 L850.0,651.2 L850.7,651.7 L851.4,652.4 L852.3,653.4 L853.7,655.3 L855.5,658.0 L856.0,658.2 L856.3,658.3 L856.7,658.3 L857.1,658.4 L857.4,658.4 L857.7,658.3 L858.0,658.3 L858.3,658.3 L858.6,658.2 L858.9,658.1 L859.2,658.1 L859.5,658.0 L859.8,657.9 L860.0,657.8 L860.3,657.6 L860.6,657.5 L860.8,657.4 L861.1,657.2 L861.3,657.1 L861.6,656.9 L861.8,656.7 L862.1,656.5 L862.3,656.3 L862.6,656.1 L862.8,655.8 L863.0,655.5 L863.2,655.2 L863.4,654.7 L862.7,651.5 L862.4,649.2 L862.3,647.9 L862.4,646.8 L862.5,646.0 L862.7,645.3 L862.9,644.7 L863.1,644.2 L863.4,643.8 L863.7,643.4 L864.0,643.0 L864.3,642.7 L864.6,642.5 L865.0,642.3 L865.3,642.1 L865.7,642.0 L866.0,641.9 L866.4,641.8Z" fill="none" stroke="#000" stroke-width="2" stroke-linejoin="round"/>
<path d="M879.4,696.5 L858.4,666.6 A40.7,40.7 0 0 1 909.3,675.6 Z" fill="none" stroke="#000" stroke-width="2" stroke-linejoin="round"/>
<path d="M884.0,703.1 L913.9,682.1 A40.7,40.7 0 0 1 904.9,733.0 Z" fill="none" stroke="#000" stroke-width="2" stroke-linejoin="round"/>
<path d="M877.4,707.7 L898.4,737.6 A40.7,40.7 0 0 1 847.5,728.6 Z" fill="none" stroke="#000" stroke-width="2" stroke-linejoin="round"/>
<path d="M872.8,701.1 L842.9,722.1 A40.7,40.7 0 0 1 851.9,671.2 Z" fill="none" stroke="#000" stroke-width="2" stroke-linejoin="round"/>
<circle cx="878.4" cy="702.1" r="3.6" fill="none" stroke="#000" stroke-width="1.8"/>
<line x1="461" y1="201" x2="461" y2="768" stroke="#0a0aa0" stroke-width="2"/>
<line x1="461" y1="768" x2="574" y2="768" stroke="#8c0c0c" stroke-width="2"/>
<path d="M573.5,767 L585,752.5 M575,752.5 L585.5,767" stroke="#9c1010" stroke-width="1.8"/>
<path d="M461,768 L461,760 A8,8 0 0 0 453,768 Z" fill="#5a5a5e"/>
<path d="M461,768 L469,768 A8,8 0 0 0 461,760 Z" fill="#c0c020"/>
<path d="M461,768 L461,776 A8,8 0 0 0 469,768 Z" fill="#5a5a5e"/>
<path d="M461,768 L453,768 A8,8 0 0 0 461,776 Z" fill="#c0c020"/>
</svg>

<!-- ============ DIALOG ============ -->
<div id="dlg" class="a">
  <div id="dtitle" class="a"></div>
  <div class="t" style="left:7px;top:10px;font-size:13px;font-weight:bold;color:#fff;text-shadow:1px 1px #0a1e6e">Tool Crib</div>
  <div class="a" style="left:670px;top:5px;width:21px;height:21px;border:1px solid #fff;border-radius:3px;background:linear-gradient(135deg,#eea088,#e06040 40%,#d04a20 70%,#c03a10)"><svg class="a" style="left:0;top:0" width="19" height="19"><path d="M5 5 L14 14 M14 5 L5 14" stroke="#fff" stroke-width="2.4"/></svg></div>
  <div id="client" class="a">
  </div>
</div>


<!-- dialog contents, page coords -->
<div class="a" style="left:36px;top:166px;width:251px;height:522px;background:#a0a0a0;border:1px solid #8ea2c0"></div>
<div class="t tree" style="left:40px;top:171px;letter-spacing:0.6px">Tools</div>
<div class="node" style="left:40px;top:186px"><svg width="16" height="16"><path d="M5 1.2 H11 L14.8 5 V11 L11 14.8 H5 L1.2 11 V5 Z" fill="#fff" stroke="#000" stroke-width="2" stroke-linejoin="round"/><line x1="1" y1="8" x2="15" y2="8" stroke="#000" stroke-width="2"/></svg></div>
<div class="t tree" style="left:60px;top:189px;letter-spacing:0.3px">Metric</div>
<div class="node" style="left:60px;top:204px"><svg width="16" height="16"><path d="M5 1.2 H11 L14.8 5 V11 L11 14.8 H5 L1.2 11 V5 Z" fill="#fff" stroke="#000" stroke-width="2" stroke-linejoin="round"/><line x1="1" y1="8" x2="15" y2="8" stroke="#000" stroke-width="2"/></svg></div>
<div class="t tree" style="left:80px;top:207px;letter-spacing:0.25px">EndMills</div>
<svg class="a" style="left:88px;top:222px" width="11" height="18"><rect x="0" y="0" width="11" height="18" fill="#7a7a80"/><path d="M1 17 L9 3 M4 17 L10 7 M0 11 L6 1" stroke="#e8e8e8" stroke-width="2"/><rect x="0" y="0" width="11" height="2" fill="#606068"/><path d="M0 0 V18 M10.5 0 V18" stroke="#505058" stroke-width="1"/></svg>
<div class="a" style="left:112px;top:222px;width:146px;height:18px;background:#316ac5"></div>
<div class="t tree" style="left:114px;top:225px;color:#fff">Endmill-E-R0.00-T0.0-F0.0</div>
<div class="node" style="left:60px;top:240px"><svg width="16" height="16"><path d="M5 1.2 H11 L14.8 5 V11 L11 14.8 H5 L1.2 11 V5 Z" fill="#fff" stroke="#000" stroke-width="2" stroke-linejoin="round"/><line x1="1" y1="8" x2="15" y2="8" stroke="#000" stroke-width="2"/></svg></div>
<div class="t tree" style="left:80px;top:243px;letter-spacing:0.15px">BallMills</div>
<svg class="a" style="left:88px;top:260px" width="12" height="17"><defs><linearGradient id="bm" x1="0" y1="0" x2="1" y2="1"><stop offset="0" stop-color="#5a5a5a"/><stop offset="0.35" stop-color="#9a9a9a"/><stop offset="0.5" stop-color="#f0f0f0"/><stop offset="0.65" stop-color="#b0b0b0"/><stop offset="1" stop-color="#606060"/></linearGradient></defs><ellipse cx="6" cy="8.2" rx="4.8" ry="7.8" fill="url(#bm)"/></svg>
<div class="t tree" style="left:114px;top:261px;letter-spacing:-0.12px">BallMillM1-B-R0.00-T0.0-F0.0</div>
<div class="node" style="left:60px;top:276px"><svg width="16" height="16"><path d="M5 1.2 H11 L14.8 5 V11 L11 14.8 H5 L1.2 11 V5 Z" fill="#fff" stroke="#000" stroke-width="2" stroke-linejoin="round"/><line x1="1" y1="8" x2="15" y2="8" stroke="#000" stroke-width="2"/></svg></div>
<div class="t tree" style="left:80px;top:279px;letter-spacing:-0.2px">VBits</div>
<svg class="a" style="left:88px;top:294px" width="12" height="18"><path d="M6.5 0 L10 5 L10.5 11 L7 17.5 L2.5 12 L3 5 Z" fill="#8a8a8a"/><path d="M6.5 1 L8.5 6 L8 11 L6.5 12 Z" fill="#e6e6e6"/><path d="M2.5 11 L6 10.5 L10.5 11 L7 17 Z" fill="#e0602a"/><path d="M2.5 11 L5 11 L6.5 17 Z" fill="#8a1a20"/></svg>
<div class="t tree" style="left:114px;top:297px">VBit1-V-R0.00-T45.0-F0.0</div>
<div class="node" style="left:40px;top:330px"><svg width="16" height="16"><path d="M5 1.2 H11 L14.8 5 V11 L11 14.8 H5 L1.2 11 V5 Z" fill="#fff" stroke="#000" stroke-width="2" stroke-linejoin="round"/><line x1="1" y1="8" x2="15" y2="8" stroke="#000" stroke-width="2"/></svg></div>
<div class="t tree" style="left:60px;top:333px;letter-spacing:0.4px">Standard</div>
<div class="t tree" style="left:80px;top:351px;letter-spacing:0.25px">EndMills</div>
<div class="t tree" style="left:80px;top:369px;letter-spacing:0.15px">BallMills</div>
<div class="t tree" style="left:80px;top:387px;letter-spacing:-0.2px">VBits</div>

<div class="t dl" style="left:312px;top:186.6px">Tool Type</div>
<div class="din" style="left:309px;top:205px;width:144px;height:21px;padding-left:4px;line-height:19px">EndMill</div>
<div class="a" style="left:436px;top:207px;width:16px;height:17px;background:linear-gradient(#c6d4f7,#b4c8f5);border-radius:1px"><svg width="16" height="17"><path d="M4 6 L8 10 L12 6" fill="none" stroke="#4d6185" stroke-width="2.2"/></svg></div>

<div class="gb" style="left:296px;top:245px;width:163px;height:51px"></div>
<div class="t gbt" style="left:303px;top:239px">Tool Ops</div>
<div class="t dl" style="left:312px;top:255.3px">Diam</div>
<div class="t dl" style="left:356.6px;top:253.7px">Depth Per Pass</div>
<div class="din" style="left:304px;top:269px;width:44px;height:20px;padding-left:4px">5</div>
<div class="din" style="left:366px;top:269px;width:44px;height:20px;padding-left:4px">3</div>
<div class="a" style="left:419px;top:270px;width:19px;height:16px;overflow:hidden"><div class="t dl" style="left:0.5px;top:4.3px;letter-spacing:-0.9px">mms</div></div>

<div class="gb" style="left:296px;top:307px;width:164px;height:51px"></div>
<div class="t gbt" style="left:302.6px;top:302px">Stepover</div>
<div class="din" style="left:304px;top:326px;width:44px;height:20px;padding-left:4px">2.5</div>
<div class="t dl" style="left:353.8px;top:331.4px;letter-spacing:-0.9px">mms</div>
<div class="din" style="left:396px;top:326px;width:44px;height:20px;padding-left:4px">50</div>
<div class="t dl" style="left:441.5px;top:331.4px">%</div>

<div class="t dl" style="left:312px;top:368.7px">Taper</div>
<div class="t dl" style="left:384.7px;top:370.3px">Flute length</div>
<div class="din" style="left:312px;top:387px;width:51px;height:20px;padding-left:4px">0</div>
<div class="din" style="left:385px;top:387px;width:51px;height:20px;padding-left:4px">10</div>
<div class="t dl" style="left:311.5px;top:411.6px">Bottom Flat</div>
<div class="din" style="left:312px;top:431px;width:51px;height:20px;padding-left:4px">0</div>
<div class="cb" style="left:387px;top:436px"><svg width="11" height="11"><path d="M1.5 4.5 L4 7.5 L9.5 1.5" fill="none" stroke="#21a121" stroke-width="2.2"/></svg></div>
<div class="t dl" style="left:402.6px;top:438.6px">Metric</div>
<div class="t dl" style="left:311.5px;top:455.9px">Radius</div>
<div class="din" style="left:312px;top:475px;width:51px;height:20px;padding-left:4px">0</div>

<div class="t dl" style="left:300.8px;top:526.6px">Spindle Speed</div>
<div class="t dl" style="left:402.6px;top:526.7px">Feedrate</div>
<div class="din" style="left:301px;top:543px;width:71px;height:20px;padding-left:4px">1750</div>
<div class="din" style="left:388px;top:543px;width:71px;height:20px;padding-left:4px">500</div>
<div class="t dl" style="left:295px;top:573.3px">GCode Tool Number</div>
<div class="t dl" style="left:398.5px;top:575.5px">Plungerate</div>
<div class="din" style="left:322px;top:589px;width:29px;height:23px;padding-left:4px;line-height:18px">0</div>
<div class="a" style="left:353px;top:589px;width:15px;height:11px;background:linear-gradient(#c8d6f8,#b0c4f4);border-radius:1px"><svg width="15" height="11"><path d="M4 7 L7.5 3.5 L11 7" fill="none" stroke="#4d6185" stroke-width="2"/></svg></div>
<div class="a" style="left:353px;top:601px;width:15px;height:10px;background:linear-gradient(#c8d6f8,#b0c4f4);border-radius:1px"><svg width="15" height="10"><path d="M4 3 L7.5 6.5 L11 3" fill="none" stroke="#4d6185" stroke-width="2"/></svg></div>
<div class="din" style="left:388px;top:592px;width:71px;height:20px;padding-left:4px">250</div>
<div class="t dl" style="left:494.2px;top:554.6px">Units</div>
<div class="din" style="left:472px;top:569px;width:72px;height:20px;padding-left:4px;line-height:18px">mm/sec</div>
<div class="a" style="left:527px;top:571px;width:15px;height:16px;background:linear-gradient(#c6d4f7,#b4c8f5);border-radius:1px"><svg width="15" height="16"><path d="M3.5 6 L7.5 10 L11.5 6" fill="none" stroke="#4d6185" stroke-width="2.2"/></svg></div>

<div class="gb" style="left:302px;top:625px;width:168px;height:64px"></div>
<div class="t gbt" style="left:309px;top:619px">Toolbox operations</div>
<div class="btn" style="left:305px;top:636px;width:73px;height:20px;line-height:18px">Import</div>
<div class="btn" style="left:385px;top:636px;width:73px;height:20px;line-height:18px">Export</div>
<div class="btn" style="left:305px;top:664px;width:73px;height:20px;line-height:18px">Delete</div>

<div class="t dl" style="left:536.4px;top:168.4px">Name</div>
<div class="din" style="left:504px;top:183px;width:177px;height:21px;padding-left:4px;line-height:19px">Endmill</div>
<div class="gb" style="left:496px;top:216px;width:89px;height:40px"></div>
<div class="t gbt" style="left:503px;top:210px">Favorites List</div>
<div class="cb" style="left:511px;top:232px"><svg width="11" height="11"><path d="M1.5 4.5 L4 7.5 L9.5 1.5" fill="none" stroke="#21a121" stroke-width="2.2"/></svg></div>
<div class="t dl" style="left:526.4px;top:233.7px">Included</div>
<div class="a" style="left:595px;top:212px;width:81px;height:221px;border:1px solid #77776a"></div>

<div class="btn" style="left:601px;top:621px;width:73px;height:21px;line-height:19px">Cancel</div>
<div class="btn" style="left:518px;top:655px;width:70px;height:26px;line-height:24px">Apply</div>
<div class="btn" style="left:601px;top:655px;width:73px;height:26px;line-height:24px">OK</div>

</body></html>
